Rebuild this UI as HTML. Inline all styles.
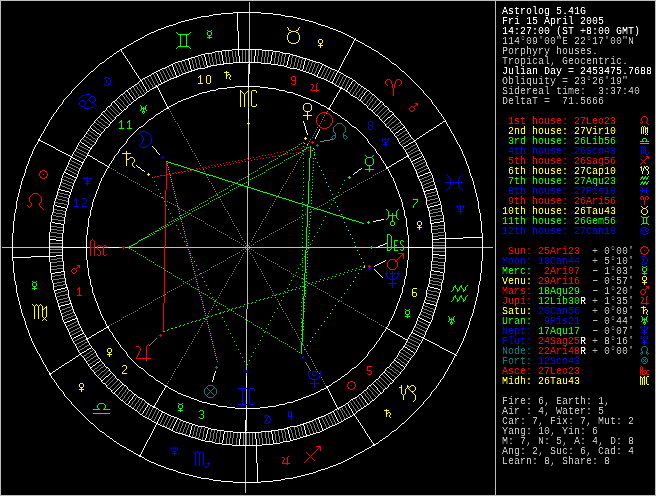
<!DOCTYPE html>
<html><head><meta charset="utf-8"><title>Astrolog 5.41G</title>
<style>
html,body{margin:0;padding:0;background:#000;}
body{width:656px;height:496px;position:relative;overflow:hidden;font-family:"Liberation Mono",monospace;}
svg{position:absolute;left:0;top:0;display:block;}
#side{position:absolute;left:502px;top:0;width:154px;height:496px;filter:url(#thr);}
.r{position:absolute;left:0;height:10px;width:154px;white-space:pre;}
.s{position:absolute;top:0;white-space:pre;font-family:"Liberation Mono",monospace;font-size:10.5px;line-height:10px;height:10px;transform:scaleX(0.9523);transform-origin:0 0;font-weight:normal;letter-spacing:0;}
</style></head><body>
<svg width="656" height="496" viewBox="0 0 656 496" shape-rendering="crispEdges" fill="none" stroke-width="1">
<g transform="translate(0,0.5)">
<path stroke="#bfbfbf" d="M0 0h656M2 247h10M13 247h36M50 247h11M88 247h2M95 247h2M98 247h5M104 247h4M119 247h3M125 247h3M129 247h35M165 247h23M189 247h58M248 247h58M307 247h63M373 247h3M378 247h9M388 247h3M392 247h2M395 247h8M404 247h3M434 247h11M446 247h36M483 247h10M0 495h656M246 387h1M248 107h1"/>
<path stroke="#ffffff" d="M233 12h28M221 13h12M261 13h12M213 14h8M273 14h8M209 15h4M281 15h4M201 16h8M285 16h8M197 17h4M293 17h4M193 18h4M297 18h4M189 19h4M301 19h4M185 20h4M305 20h4M181 21h4M309 21h4M178 22h3M313 22h3M176 23h2M316 23h2M173 24h3M318 24h3M169 25h4M321 25h4M166 26h3M325 26h3M164 27h2M328 27h2M161 28h3M330 28h3M158 29h3M333 29h3M156 30h2M336 30h2M154 31h2M338 31h3M151 32h3M341 32h2M149 33h2M343 33h2M147 34h2M345 34h2M145 35h2M347 35h2M349 36h2M142 37h2M351 37h2M140 38h2M138 39h2M354 39h2M136 40h2M356 40h2M134 41h2M358 41h2M360 42h2M131 43h2M362 43h2M129 44h2M127 45h2M365 45h2M367 46h2M124 47h2M369 47h2M122 48h2M120 49h2M232 49h30M372 49h2M222 50h10M262 50h11M374 50h2M117 51h2M215 51h7M273 51h7M376 51h2M212 52h3M280 52h3M114 53h2M205 53h7M283 53h7M201 54h4M290 54h3M380 54h2M198 55h3M293 55h4M110 56h2M195 56h3M297 56h3M383 56h2M191 57h4M300 57h3M107 58h2M188 58h3M303 58h4M386 58h2M185 59h4M307 59h3M182 60h3M310 60h3M178 61h4M313 61h3M102 62h2M175 62h3M233 62h28M316 62h4M100 63h2M173 63h2M223 63h10M261 63h10M320 63h2M392 63h2M171 64h2M217 64h7M271 64h7M322 64h2M394 64h2M169 65h2M211 65h6M278 65h6M324 65h2M167 66h2M207 66h4M284 66h3M326 66h2M165 67h2M205 67h3M287 67h3M328 67h2M162 68h3M198 68h7M290 68h7M330 68h2M160 69h2M195 69h3M297 69h3M332 69h3M158 70h2M191 70h4M300 70h3M335 70h2M91 71h2M156 71h2M189 71h3M303 71h3M337 71h2M402 71h2M154 72h2M186 72h3M306 72h3M339 72h2M152 73h2M183 73h3M309 73h3M341 73h2M181 74h2M312 74h2M149 75h2M179 75h2M314 75h2M344 75h2M147 76h2M176 76h3M316 76h2M346 76h2M145 77h2M174 77h3M318 77h3M348 77h2M143 78h2M171 78h3M321 78h3M350 78h2M169 79h2M324 79h2M140 80h2M167 80h2M326 80h2M353 80h2M165 81h2M328 81h2M163 82h2M330 82h3M161 83h2M332 83h2M135 84h2M159 84h2M358 84h2M335 85h2M132 86h2M156 86h2M235 86h25M337 86h2M361 86h2M154 87h2M227 87h8M260 87h8M339 87h3M129 88h2M152 88h2M218 88h9M268 88h8M340 88h3M364 88h2M150 89h2M216 89h2M276 89h3M343 89h2M126 90h2M210 90h6M279 90h6M345 90h2M367 90h2M147 91h2M207 91h3M285 91h2M346 91h2M202 92h5M287 92h6M199 93h3M293 93h2M121 94h2M197 94h2M295 94h3M372 94h2M142 95h2M194 95h3M298 95h3M351 95h2M140 96h2M191 96h3M301 96h2M353 96h2M138 97h2M189 97h2M303 97h3M355 97h2M186 98h3M306 98h3M183 99h3M309 99h2M134 100h2M181 100h2M311 100h3M359 100h2M113 101h2M178 101h3M314 101h2M380 101h2M316 102h2M175 103h2M318 103h2M129 104h2M173 104h2M364 104h2M171 105h2M321 105h3M108 106h2M169 106h2M324 106h2M385 106h2M167 107h2M166 108h3M327 108h3M124 109h2M164 109h2M329 109h2M369 109h2M371 110h2M103 111h2M161 111h2M390 111h2M333 112h2M158 113h2M335 113h2M101 114h2M156 114h2M392 114h2M117 115h2M338 115h2M376 115h2M388 117h2M151 118h2M342 118h2M149 119h2M345 120h2M443 121h3M110 122h2M440 123h2M437 125h2M141 126h2M352 126h2M106 127h2M139 127h2M354 127h2M387 127h2M403 127h2M434 127h2M400 129h2M431 129h2M93 130h2M429 130h2M396 132h2M426 132h2M97 133h2M99 134h2M423 134h2M420 136h2M417 138h2M38 139h2M38 140h3M414 140h2M41 141h2M413 141h2M43 142h2M411 142h2M45 143h2M82 143h2M409 143h2M47 144h2M49 145h2M85 145h2M406 145h2M51 146h2M404 146h2M53 147h2M88 147h2M90 148h2M56 149h2M58 150h2M60 151h2M62 152h2M64 153h2M66 154h2M68 155h2M87 155h3M407 155h2M70 156h2M90 156h2M406 156h3M71 157h2M404 157h2M419 157h2M73 158h2M93 158h2M417 158h2M75 159h2M95 159h2M401 159h2M415 159h2M77 160h2M399 160h2M413 160h2M79 161h2M98 161h2M397 161h2M411 161h2M81 162h3M100 162h2M102 163h2M394 163h2M392 164h2M105 165h2M107 166h2M389 166h2M138 167h2M386 167h3M386 168h2M359 169h2M142 170h2M64 172h2M355 172h2M428 172h3M66 173h2M425 173h3M68 174h2M423 174h2M70 175h2M420 175h3M72 176h2M417 176h3M74 177h3M434 188h3M58 189h3M430 189h4M61 190h4M426 190h4M65 191h4M423 191h3M69 192h2M438 204h3M55 205h2M434 205h4M57 206h4M430 206h4M61 207h4M427 207h3M65 208h2M381 219h3M376 220h5M373 221h3M440 221h4M52 222h3M434 222h6M55 223h6M430 223h4M61 224h3M463 237h20M439 238h24M49 239h7M432 239h7M56 240h7M385 243h2M383 244h2M380 245h3M378 246h2M61 247h27M108 247h11M376 247h2M407 247h27M432 254h7M56 255h7M439 255h7M31 256h25M12 257h19M383 261h2M381 262h2M379 263h2M377 264h2M375 265h2M431 270h3M61 271h4M434 271h6M55 272h6M440 272h3M51 273h4M428 286h2M65 287h3M430 287h4M61 288h4M434 288h4M57 289h4M438 289h2M54 290h3M424 302h2M69 303h3M426 303h4M65 304h4M430 304h4M61 305h4M434 305h3M58 306h3M418 317h2M75 318h3M420 318h2M72 319h3M422 319h2M70 320h2M424 320h2M67 321h3M426 321h2M64 322h3M428 322h3M107 326h2M106 327h3M104 328h2M386 328h2M388 329h2M101 330h2M99 331h2M391 331h2M97 332h2M393 332h2M411 332h2M82 333h2M413 333h2M80 334h2M94 334h2M396 334h2M415 334h2M78 335h2M92 335h2M398 335h2M417 335h2M76 336h2M400 336h2M419 336h2M74 337h2M89 337h2M421 337h3M86 338h3M403 338h2M423 338h2M86 339h2M405 339h3M425 339h2M427 340h2M429 341h2M431 342h2M433 343h2M435 344h2M437 345h2M403 346h2M405 347h2M440 347h2M89 348h2M442 348h2M87 349h2M408 349h2M444 349h2M446 350h2M84 351h2M411 351h2M448 351h2M82 352h2M450 352h2M80 353h2M452 353h2M79 354h2M454 354h2M455 355h2M76 356h2M73 358h2M70 360h2M394 360h2M67 362h2M97 362h2M397 362h2M65 363h2M62 365h2M93 365h2M401 365h2M59 367h2M90 367h2M106 367h2M139 367h2M354 367h2M387 367h2M141 368h2M352 368h2M56 369h2M53 371h2M383 372h2M49 373h3M49 374h2M345 374h2M149 375h2M106 376h2M151 376h2M342 376h2M117 379h2M338 379h2M376 379h2M101 380h2M156 380h2M392 380h2M158 381h2M335 381h2M333 382h2M103 383h2M161 383h2M390 383h2M122 384h2M124 385h2M164 385h2M329 385h2M369 385h2M165 386h3M326 386h3M326 387h2M108 388h2M169 388h2M324 388h2M385 388h2M171 389h2M321 389h3M129 390h2M173 390h2M364 390h2M175 391h2M318 391h2M316 392h2M113 393h2M178 393h3M314 393h2M380 393h2M134 394h2M181 394h2M311 394h3M359 394h2M183 395h3M309 395h2M186 396h3M306 396h3M138 397h2M189 397h2M303 397h3M355 397h2M140 398h2M191 398h3M301 398h2M353 398h2M142 399h2M194 399h3M298 399h3M351 399h2M121 400h2M197 400h2M295 400h3M372 400h2M199 401h3M293 401h2M202 402h5M287 402h6M147 403h2M207 403h3M285 403h2M346 403h2M126 404h2M148 404h2M210 404h6M279 404h6M367 404h2M150 405h2M216 405h2M276 405h3M343 405h2M129 406h2M152 406h3M218 406h9M268 406h8M341 406h2M364 406h2M153 407h3M227 407h8M260 407h8M339 407h2M132 408h2M156 408h2M235 408h25M337 408h2M361 408h2M335 409h2M135 410h2M159 410h2M358 410h2M161 411h2M332 411h2M162 412h3M330 412h2M165 413h2M328 413h2M140 414h2M167 414h2M326 414h2M353 414h2M169 415h2M324 415h2M143 416h2M171 416h3M321 416h3M350 416h2M145 417h2M174 417h3M318 417h3M348 417h2M147 418h2M177 418h2M316 418h3M346 418h2M149 419h2M179 419h2M314 419h2M344 419h2M181 420h2M312 420h2M152 421h2M183 421h3M309 421h3M341 421h2M154 422h2M186 422h3M306 422h3M339 422h2M91 423h2M156 423h2M189 423h3M303 423h3M337 423h2M402 423h2M158 424h2M192 424h3M300 424h4M335 424h2M160 425h2M195 425h3M297 425h3M332 425h3M162 426h3M198 426h7M290 426h7M330 426h2M165 427h2M205 427h3M287 427h3M328 427h2M167 428h2M208 428h3M284 428h4M326 428h2M169 429h2M211 429h6M278 429h6M324 429h2M171 430h2M217 430h7M271 430h7M322 430h2M394 430h2M100 431h2M173 431h2M224 431h9M261 431h11M320 431h2M392 431h2M102 432h2M175 432h3M233 432h28M316 432h4M178 433h4M313 433h3M182 434h3M310 434h3M185 435h3M306 435h4M107 436h2M188 436h3M303 436h4M386 436h2M191 437h4M300 437h3M110 438h2M195 438h3M297 438h3M383 438h2M198 439h3M293 439h4M201 440h4M290 440h3M380 440h2M114 441h2M205 441h7M283 441h7M212 442h3M280 442h3M117 443h2M215 443h7M273 443h7M376 443h2M222 444h10M262 444h11M373 444h3M120 445h2M232 445h30M372 445h3M122 446h2M124 447h2M369 447h2M367 448h2M127 449h2M365 449h2M129 450h2M131 451h2M362 451h2M360 452h2M134 453h2M358 453h2M136 454h2M356 454h2M138 455h3M354 455h2M139 456h3M142 457h2M351 457h2M349 458h2M145 459h2M347 459h2M147 460h2M345 460h2M149 461h2M343 461h2M151 462h3M341 462h2M154 463h2M338 463h3M156 464h2M336 464h2M158 465h3M333 465h3M161 466h3M330 466h3M164 467h2M328 467h2M166 468h3M325 468h3M169 469h4M321 469h4M173 470h3M318 470h3M176 471h2M316 471h2M178 472h3M313 472h3M181 473h4M309 473h4M185 474h4M305 474h4M189 475h4M301 475h4M193 476h4M297 476h4M197 477h4M293 477h4M201 478h8M285 478h8M209 479h4M281 479h4M213 480h8M273 480h8M221 481h12M261 481h12M233 482h28M36 144h1M38 141h1M38 353h1M39 138h1M42 133h1M44 364h1M46 126h1M48 371h1M49 372h1M50 119h1M50 375h1M52 116h1M52 372h1M52 378h1M53 379h1M54 113h1M55 112h1M55 148h1M55 370h1M55 382h1M57 109h1M57 385h1M58 188h1M58 190h1M58 368h1M59 106h1M59 388h1M60 105h1M60 389h1M61 104h1M61 366h1M61 390h1M62 391h1M64 99h1M64 171h1M64 323h1M64 364h1M65 98h1M65 396h1M66 97h1M66 397h1M67 96h1M67 398h1M68 95h1M68 399h1M69 94h1M69 361h1M69 400h1M70 93h1M70 401h1M72 90h1M72 359h1M72 404h1M73 89h1M73 338h1M73 405h1M74 88h1M74 151h1M74 343h1M74 406h1M75 87h1M75 357h1M75 407h1M76 86h1M76 178h1M76 408h1M77 85h1M77 409h1M78 84h1M78 355h1M78 410h1M79 83h1M79 142h1M79 352h1M79 411h1M80 82h1M80 412h1M81 81h1M81 139h1M81 142h1M81 355h1M81 413h1M82 80h1M82 138h1M82 356h1M82 414h1M83 79h1M83 137h1M83 161h1M83 332h1M83 357h1M83 415h1M84 78h1M84 144h1M84 334h1M84 416h1M85 77h1M85 134h1M85 158h1M85 360h1M85 417h1M86 76h1M86 337h1M86 350h1M86 418h1M87 75h1M87 131h1M87 146h1M87 154h1M87 340h1M87 363h1M87 419h1M88 74h1M88 420h1M89 73h1M89 128h1M89 366h1M89 421h1M90 72h1M90 149h1M90 345h1M90 368h1M90 422h1M91 125h1M91 128h1M91 147h1M91 336h1M91 369h1M92 124h1M92 129h1M92 146h1M92 157h1M92 348h1M92 366h1M92 370h1M93 70h1M93 123h1M93 145h1M93 349h1M93 371h1M93 424h1M94 69h1M94 144h1M94 350h1M94 425h1M95 68h1M95 120h1M95 131h1M95 364h1M95 374h1M95 426h1M96 67h1M96 119h1M96 132h1M96 333h1M96 363h1M96 375h1M96 427h1M97 66h1M97 118h1M97 160h1M97 376h1M97 428h1M98 65h1M98 117h1M98 137h1M98 357h1M98 377h1M98 429h1M99 64h1M99 116h1M99 136h1M99 358h1M99 361h1M99 378h1M99 430h1M100 115h1M100 135h1M100 379h1M101 113h1M101 133h1M101 361h1M101 381h1M102 112h1M102 132h1M102 177h1M102 362h1M102 382h1M103 115h1M103 131h1M103 329h1M103 363h1M103 379h1M104 61h1M104 116h1M104 164h1M104 320h1M104 378h1M104 433h1M105 60h1M105 110h1M105 117h1M105 128h1M105 366h1M105 377h1M105 384h1M105 434h1M106 59h1M106 118h1M106 435h1M107 107h1M107 119h1M107 168h1M107 387h1M108 120h1M108 126h1M108 167h1M108 328h1M108 368h1M108 375h1M109 57h1M109 121h1M109 374h1M109 437h1M110 105h1M110 123h1M110 163h1M110 331h1M110 371h1M110 373h1M110 389h1M111 332h1M111 372h1M112 55h1M112 102h1M112 121h1M112 160h1M112 373h1M112 392h1M112 439h1M113 54h1M113 120h1M113 374h1M113 440h1M114 102h1M114 119h1M114 337h1M114 375h1M114 392h1M115 100h1M115 103h1M115 155h1M115 391h1M115 394h1M116 52h1M116 99h1M116 104h1M116 116h1M116 154h1M116 340h1M116 378h1M116 390h1M116 395h1M116 442h1M117 98h1M117 105h1M117 153h1M117 341h1M117 389h1M117 396h1M118 97h1M118 388h1M118 397h1M119 50h1M119 96h1M119 108h1M119 114h1M119 344h1M119 380h1M119 387h1M119 398h1M119 444h1M120 95h1M120 109h1M120 113h1M120 148h1M120 381h1M120 386h1M120 399h1M121 110h1M121 112h1M121 147h1M121 347h1M121 382h1M121 385h1M122 52h1M122 111h1M122 146h1M122 348h1M122 383h1M123 93h1M123 110h1M123 145h1M123 349h1M123 401h1M124 55h1M124 92h1M124 144h1M124 350h1M124 402h1M125 91h1M125 143h1M125 351h1M125 403h1M126 46h1M126 58h1M126 108h1M126 386h1M126 448h1M127 91h1M128 61h1M128 89h1M128 92h1M128 105h1M128 138h1M128 356h1M128 389h1M128 403h1M128 405h1M129 137h1M129 357h1M130 64h1M130 95h1M130 136h1M130 358h1M130 400h1M131 87h1M131 96h1M131 103h1M131 135h1M131 359h1M131 391h1M131 399h1M131 407h1M132 102h1M132 134h1M132 360h1M132 392h1M133 42h1M133 69h1M133 99h1M133 101h1M133 133h1M133 361h1M133 393h1M133 396h1M133 452h1M134 85h1M134 132h1M134 362h1M134 395h1M134 409h1M135 72h1M135 131h1M135 363h1M136 99h1M136 130h1M136 165h1M136 364h1M136 395h1M137 75h1M137 83h1M137 98h1M137 129h1M137 166h1M137 365h1M137 396h1M137 411h1M138 82h1M138 128h1M138 366h1M138 412h1M139 78h1M139 81h1M139 413h1M140 79h1M140 168h1M140 454h1M141 81h1M141 169h1M142 79h1M142 413h1M142 415h1M143 125h1M143 369h1M144 36h1M144 86h1M144 94h1M144 124h1M144 171h1M144 370h1M144 400h1M144 410h1M144 458h1M145 93h1M145 123h1M145 371h1M145 401h1M146 92h1M146 122h1M146 372h1M146 402h1M146 407h1M147 121h1M147 373h1M148 120h1M148 374h1M148 439h1M149 90h1M151 74h1M151 420h1M152 146h1M153 117h1M153 147h1M153 377h1M154 116h1M154 148h1M154 378h1M154 405h1M155 115h1M155 149h1M155 379h1M156 73h1M156 85h1M156 402h1M156 424h1M157 87h1M157 152h1M158 85h1M158 153h1M158 409h1M159 154h1M160 112h1M160 382h1M160 395h1M161 82h1M163 110h1M163 384h1M163 390h1M165 387h1M167 106h1M168 387h1M176 75h1M177 102h1M177 392h1M177 419h1M188 60h1M191 69h1M192 425h1M207 65h1M208 429h1M245 433h1M246 407h1M248 87h1M249 61h1M286 65h1M287 429h1M302 69h1M303 425h1M306 434h1M318 419h1M320 104h1M320 390h1M322 65h1M326 107h1M327 388h1M329 107h1M331 104h1M331 110h1M331 384h1M332 81h1M332 111h1M332 383h1M333 412h1M334 84h1M334 410h1M335 97h1M337 72h1M337 114h1M337 380h1M337 407h1M338 70h1M338 92h1M338 409h1M338 421h1M340 89h1M340 116h1M340 378h1M341 117h1M341 377h1M343 74h1M343 420h1M344 119h1M344 375h1M345 404h1M346 55h1M347 121h1M347 373h1M348 87h1M348 92h1M348 122h1M348 372h1M348 402h1M349 93h1M349 123h1M349 371h1M349 401h1M350 84h1M350 94h1M350 124h1M350 370h1M350 400h1M350 408h1M351 125h1M351 369h1M352 79h1M352 81h1M352 415h1M353 38h1M353 174h1M353 413h1M353 456h1M354 40h1M354 173h1M354 415h1M355 38h1M355 81h1M355 413h1M355 416h1M356 82h1M356 128h1M356 366h1M356 412h1M357 83h1M357 98h1M357 129h1M357 171h1M357 365h1M357 396h1M357 411h1M357 419h1M358 99h1M358 130h1M358 170h1M358 364h1M358 395h1M359 131h1M359 363h1M359 422h1M360 85h1M360 99h1M360 132h1M360 362h1M360 409h1M361 101h1M361 133h1M361 168h1M361 361h1M361 393h1M361 395h1M361 425h1M362 96h1M362 102h1M362 134h1M362 360h1M362 392h1M363 87h1M363 95h1M363 103h1M363 135h1M363 359h1M363 391h1M363 398h1M363 407h1M363 428h1M364 44h1M364 136h1M364 358h1M364 399h1M364 450h1M365 92h1M365 137h1M365 357h1M366 89h1M366 91h1M366 105h1M366 138h1M366 356h1M366 389h1M366 402h1M366 405h1M366 433h1M367 403h1M368 108h1M368 386h1M368 436h1M369 91h1M369 143h1M369 351h1M369 403h1M370 92h1M370 144h1M370 350h1M370 402h1M370 439h1M371 48h1M371 93h1M371 145h1M371 349h1M371 384h1M371 401h1M371 446h1M372 111h1M372 146h1M372 348h1M372 383h1M372 442h1M373 109h1M373 112h1M373 147h1M373 347h1M373 382h1M373 384h1M373 443h1M374 95h1M374 108h1M374 113h1M374 148h1M374 266h1M374 269h1M374 381h1M374 385h1M374 399h1M375 96h1M375 107h1M375 114h1M375 270h1M375 344h1M375 380h1M375 386h1M375 398h1M376 97h1M376 106h1M376 271h1M376 387h1M376 397h1M377 98h1M377 105h1M377 153h1M377 272h1M377 341h1M377 396h1M378 52h1M378 99h1M378 104h1M378 116h1M378 154h1M378 273h1M378 340h1M378 378h1M378 390h1M378 395h1M378 442h1M379 53h1M379 100h1M379 103h1M379 155h1M379 274h1M379 391h1M379 394h1M379 441h1M380 102h1M380 119h1M380 275h1M380 337h1M380 375h1M380 392h1M381 120h1M381 276h1M381 374h1M382 55h1M382 102h1M382 121h1M382 160h1M382 277h1M382 373h1M382 392h1M382 439h1M383 122h1M383 332h1M384 105h1M384 121h1M384 123h1M384 163h1M384 331h1M384 371h1M384 389h1M385 57h1M385 120h1M385 260h1M385 373h1M385 437h1M386 119h1M386 126h1M386 166h1M386 327h1M386 368h1M386 374h1M387 107h1M387 118h1M387 326h1M387 375h1M387 387h1M388 59h1M388 376h1M388 435h1M389 60h1M389 110h1M389 128h1M389 366h1M389 377h1M389 384h1M389 434h1M390 61h1M390 116h1M390 320h1M390 330h1M390 378h1M390 433h1M391 62h1M391 115h1M391 131h1M391 165h1M391 363h1M391 379h1M391 432h1M392 112h1M392 132h1M392 177h1M392 362h1M392 382h1M393 113h1M393 133h1M393 361h1M393 381h1M394 115h1M394 359h1M394 379h1M395 116h1M395 133h1M395 136h1M395 333h1M395 358h1M395 378h1M396 65h1M396 117h1M396 137h1M396 162h1M396 357h1M396 361h1M396 377h1M396 429h1M397 66h1M397 118h1M397 376h1M397 428h1M398 67h1M398 119h1M398 131h1M398 375h1M398 427h1M399 68h1M399 120h1M399 130h1M399 363h1M399 374h1M399 426h1M400 69h1M400 144h1M400 350h1M400 364h1M400 425h1M401 70h1M401 123h1M401 145h1M401 349h1M401 371h1M401 424h1M402 124h1M402 128h1M402 146h1M402 337h1M402 348h1M402 370h1M403 125h1M403 158h1M403 347h1M403 366h1M403 369h1M404 72h1M404 126h1M404 149h1M404 345h1M404 422h1M405 73h1M405 128h1M405 366h1M405 421h1M406 74h1M406 420h1M407 75h1M407 131h1M407 154h1M407 340h1M407 348h1M407 363h1M407 419h1M408 76h1M408 144h1M408 157h1M408 418h1M409 77h1M409 134h1M409 158h1M409 360h1M409 417h1M410 78h1M410 334h1M410 350h1M410 416h1M411 79h1M411 137h1M411 162h1M411 333h1M411 357h1M411 415h1M412 80h1M412 138h1M412 356h1M412 414h1M413 81h1M413 139h1M413 352h1M413 355h1M413 413h1M414 82h1M414 412h1M415 83h1M415 142h1M415 352h1M415 411h1M416 84h1M416 139h1M416 410h1M417 85h1M417 409h1M418 86h1M418 316h1M418 408h1M419 87h1M419 137h1M419 407h1M420 88h1M420 151h1M420 343h1M420 406h1M421 89h1M421 156h1M421 405h1M422 90h1M422 135h1M422 404h1M424 93h1M424 401h1M425 94h1M425 133h1M425 400h1M426 95h1M426 399h1M427 96h1M427 398h1M428 97h1M428 131h1M428 397h1M429 98h1M429 396h1M430 99h1M430 171h1M430 323h1M432 391h1M433 104h1M433 128h1M433 390h1M434 105h1M434 389h1M435 106h1M435 388h1M436 126h1M436 306h1M437 109h1M437 385h1M439 112h1M439 124h1M439 346h1M439 382h1M440 113h1M441 379h1M442 116h1M442 122h1M442 378h1M444 119h1M445 120h1M446 371h1M448 126h1M450 364h1M452 133h1M456 353h1M458 144h1"/>
<path stroke="#ff0000" d="M292 76h3M387 79h3M397 79h3M292 80h4M292 84h3M311 84h2M311 90h8M415 103h3M416 104h2M411 106h2M411 111h2M322 112h5M320 113h2M327 113h2M643 116h3M320 127h2M327 127h2M322 128h5M311 142h3M646 156h3M647 157h2M42 170h3M190 170h2M40 171h2M45 171h2M184 171h2M178 172h2M172 173h2M166 174h2M169 174h2M160 175h2M163 175h2M157 176h2M40 177h2M45 177h2M42 178h3M33 193h5M641 196h2M646 196h2M98 245h2M104 245h2M643 246h3M90 247h5M122 247h3M641 247h2M646 247h2M398 253h6M641 253h2M646 253h2M402 254h2M643 254h3M98 255h2M104 255h2M390 259h5M395 260h2M395 261h2M77 265h3M78 266h2M368 266h3M73 268h2M390 269h5M73 273h2M646 286h3M647 287h2M78 288h2M642 289h2M642 294h2M77 295h5M641 297h2M641 303h8M159 335h3M136 346h3M136 358h15M367 366h5M367 370h4M640 370h3M644 370h2M647 370h2M642 371h2M645 373h2M368 374h3M642 374h3M647 374h2M350 381h3M348 382h2M353 382h2M348 388h2M353 388h2M350 389h3M316 446h5M319 447h2M282 457h2M282 463h8M27 205h1M28 206h1M29 207h1M30 196h1M30 202h1M30 206h1M31 195h1M32 194h1M38 194h1M39 195h1M40 172h1M40 176h1M40 196h1M40 202h1M40 206h1M41 207h1M42 208h1M43 174h1M43 209h1M46 172h1M46 176h1M72 269h1M72 272h1M75 269h1M75 272h1M76 268h1M77 267h1M77 289h1M79 267h1M79 287h1M91 240h1M92 239h1M93 240h1M97 254h1M98 249h1M99 250h1M100 246h1M106 246h1M106 254h1M123 246h1M123 248h1M136 357h1M139 347h1M147 345h1M148 344h1M154 177h1M155 176h1M160 334h1M160 336h1M175 172h1M176 173h1M181 171h1M182 172h1M187 170h1M188 171h1M196 168h1M197 169h1M199 168h1M200 169h1M202 167h1M203 168h1M205 167h1M206 168h1M208 166h1M209 167h1M211 165h1M212 167h1M214 165h1M215 166h1M217 164h1M218 166h1M220 164h1M221 165h1M223 163h1M224 165h1M226 162h1M227 164h1M229 162h1M230 164h1M232 161h1M233 163h1M235 161h1M236 162h1M238 160h1M239 162h1M241 160h1M242 161h1M244 159h1M245 161h1M247 158h1M248 160h1M250 158h1M251 160h1M253 157h1M254 159h1M256 157h1M257 159h1M259 156h1M260 158h1M262 155h1M263 158h1M265 155h1M266 157h1M268 154h1M269 157h1M271 154h1M272 156h1M274 153h1M275 156h1M277 152h1M278 155h1M280 152h1M282 462h1M283 151h1M284 154h1M286 151h1M287 154h1M287 464h1M288 456h1M290 153h1M291 83h1M292 150h1M293 153h1M295 149h1M296 152h1M298 148h1M299 152h1M301 148h1M302 151h1M304 147h1M304 462h1M305 151h1M305 461h1M306 452h1M306 460h1M307 147h1M307 453h1M307 459h1M308 150h1M308 454h1M308 458h1M309 455h1M309 457h1M310 456h1M311 89h1M311 150h1M311 455h1M311 457h1M312 141h1M312 143h1M312 454h1M312 458h1M313 453h1M313 459h1M314 452h1M314 460h1M315 451h1M316 91h1M316 450h1M317 83h1M317 449h1M318 115h1M318 125h1M318 448h1M319 114h1M319 126h1M324 120h1M329 114h1M329 126h1M330 115h1M330 125h1M348 383h1M348 387h1M351 385h1M354 383h1M354 387h1M367 373h1M369 265h1M369 267h1M386 80h1M386 84h1M387 85h1M388 261h1M388 267h1M389 260h1M389 268h1M390 80h1M395 268h1M396 80h1M396 267h1M397 259h1M398 258h1M399 85h1M399 257h1M400 80h1M400 84h1M400 256h1M401 255h1M410 107h1M410 110h1M413 107h1M413 110h1M414 106h1M415 105h1M417 105h1M640 122h1M640 164h1M641 123h1M641 159h1M641 163h1M641 199h1M641 248h1M641 252h1M641 290h1M641 293h1M641 302h1M641 366h1M642 117h1M642 160h1M642 162h1M643 161h1M644 160h1M644 162h1M644 250h1M644 290h1M644 293h1M644 372h1M645 159h1M645 163h1M645 289h1M646 117h1M646 158h1M646 288h1M646 304h1M647 123h1M647 199h1M647 248h1M647 252h1M647 296h1M648 124h1M648 158h1M648 288h1"/>
<path stroke="#00ff00" d="M208 31h3M178 34h11M208 35h3M207 37h5M178 46h11M141 108h5M142 111h3M120 121h2M128 121h2M119 128h5M127 128h5M643 138h3M640 141h4M645 141h4M640 143h9M302 150h2M367 157h5M166 161h2M168 162h3M171 163h3M174 164h4M178 165h3M367 165h5M181 166h3M184 167h3M187 168h3M190 169h4M365 169h9M194 170h3M197 171h3M200 172h3M203 173h3M206 174h3M209 175h4M213 176h3M216 177h3M348 177h3M641 177h2M644 177h2M219 178h3M643 178h2M646 178h2M222 179h3M225 180h3M228 181h4M232 182h3M641 182h2M644 182h2M235 183h3M643 183h2M646 183h2M238 184h3M240 185h4M244 186h4M248 187h3M251 188h3M254 189h3M257 190h3M260 191h3M263 192h4M267 193h3M270 194h3M273 195h3M276 196h3M279 197h3M282 198h4M286 199h3M413 199h5M289 200h3M292 201h3M295 202h3M298 203h4M302 204h3M305 205h3M307 206h4M311 207h3M314 208h3M317 209h4M321 210h3M324 211h3M327 212h3M330 213h3M333 214h3M180 215h2M336 215h4M388 215h9M340 216h3M343 217h3M642 217h6M346 218h3M349 219h3M352 220h4M356 221h3M391 221h3M359 222h3M367 222h3M362 223h2M642 223h6M391 225h3M157 230h2M155 231h2M387 234h3M147 236h2M145 237h2M143 238h2M141 239h2M139 240h2M394 240h4M401 240h2M135 243h2M133 244h2M131 245h2M186 245h2M394 245h3M129 246h2M370 247h3M387 250h3M394 250h4M401 250h2M305 252h2M189 253h2M304 256h2M643 267h3M305 269h2M643 271h3M305 272h2M642 273h5M33 282h3M304 284h2M33 286h3M302 286h3M454 286h2M460 286h2M304 287h2M32 288h5M197 289h2M304 290h2M457 290h2M463 290h2M304 293h2M454 296h2M460 296h2M302 298h2M303 299h2M457 300h2M463 300h2M303 302h2M303 305h2M303 308h2M406 310h3M303 311h2M219 313h2M215 314h2M406 314h3M405 316h5M206 317h2M203 318h2M449 319h5M642 319h5M302 320h2M301 322h2M450 322h3M643 322h3M187 323h2M302 323h2M301 326h3M175 327h2M171 328h2M302 329h2M301 330h2M163 331h2M301 334h2M301 338h2M301 344h2M99 403h5M179 404h3M179 408h3M93 409h7M103 409h7M178 410h5M200 410h3M93 413h17M201 414h2M200 418h3M32 281h1M34 287h1M34 289h1M36 281h1M98 404h1M98 408h1M104 404h1M104 408h1M119 122h1M121 120h1M127 122h1M128 247h1M129 120h1M129 248h1M131 249h1M133 250h1M135 251h1M137 242h1M137 253h1M138 241h1M139 254h1M140 105h1M140 110h1M141 109h1M141 255h1M142 112h1M143 107h1M143 113h1M143 256h1M144 112h1M145 109h1M145 257h1M146 105h1M146 110h1M147 259h1M149 234h1M149 260h1M150 235h1M151 233h1M151 261h1M152 177h1M152 234h1M153 232h1M153 262h1M154 181h1M154 233h1M155 264h1M156 185h1M157 265h1M158 189h1M159 228h1M159 266h1M160 193h1M160 229h1M161 227h1M161 267h1M162 197h1M162 228h1M163 226h1M163 268h1M164 201h1M164 227h1M165 225h1M165 270h1M166 205h1M166 226h1M167 163h1M167 165h1M167 224h1M167 271h1M167 330h1M168 167h1M168 169h1M168 209h1M168 225h1M168 329h1M169 171h1M169 173h1M169 222h1M169 272h1M170 175h1M170 177h1M170 213h1M170 224h1M171 179h1M171 181h1M171 221h1M171 273h1M172 183h1M172 185h1M172 217h1M172 223h1M173 187h1M173 189h1M173 220h1M173 275h1M174 191h1M174 193h1M174 221h1M175 195h1M175 197h1M175 219h1M175 276h1M176 32h1M176 48h1M176 199h1M176 201h1M176 220h1M176 225h1M177 33h1M177 47h1M177 203h1M177 205h1M177 218h1M177 277h1M178 207h1M178 209h1M178 219h1M178 229h1M178 403h1M179 211h1M179 213h1M179 216h1M179 278h1M179 326h1M180 233h1M180 325h1M180 409h1M180 411h1M181 219h1M181 221h1M181 279h1M182 217h1M182 223h1M182 225h1M182 237h1M182 403h1M183 214h1M183 227h1M183 229h1M183 281h1M183 325h1M184 216h1M184 231h1M184 233h1M184 241h1M184 324h1M185 213h1M185 235h1M185 237h1M185 282h1M186 215h1M186 239h1M186 241h1M187 212h1M187 243h1M187 283h1M188 214h1M188 247h1M188 249h1M189 33h1M189 47h1M189 210h1M189 251h1M189 284h1M190 32h1M190 48h1M190 213h1M190 255h1M190 257h1M191 209h1M191 259h1M191 261h1M191 286h1M191 322h1M192 211h1M192 257h1M192 263h1M192 265h1M192 321h1M193 208h1M193 267h1M193 269h1M193 287h1M194 210h1M194 261h1M194 271h1M194 273h1M195 207h1M195 275h1M195 277h1M195 288h1M195 321h1M196 209h1M196 265h1M196 279h1M196 281h1M196 320h1M197 206h1M197 283h1M197 285h1M198 208h1M198 269h1M198 287h1M199 204h1M199 291h1M199 293h1M199 320h1M199 411h1M199 417h1M200 207h1M200 273h1M200 295h1M200 319h1M201 203h1M201 292h1M201 297h1M201 299h1M202 206h1M202 277h1M202 301h1M202 303h1M203 202h1M203 293h1M203 305h1M203 307h1M204 205h1M204 281h1M204 309h1M204 311h1M205 201h1M205 294h1M205 313h1M205 315h1M206 204h1M206 285h1M206 319h1M207 30h1M207 200h1M207 295h1M207 321h1M207 323h1M208 203h1M208 289h1M208 316h1M208 325h1M208 327h1M209 36h1M209 38h1M209 198h1M209 297h1M209 329h1M209 331h1M210 201h1M210 293h1M210 333h1M210 335h1M211 30h1M211 197h1M211 298h1M211 316h1M211 337h1M211 339h1M212 200h1M212 297h1M212 315h1M212 341h1M212 343h1M213 196h1M213 299h1M213 345h1M213 347h1M214 199h1M214 301h1M214 349h1M214 351h1M215 195h1M215 300h1M215 353h1M215 355h1M216 198h1M216 305h1M216 357h1M216 359h1M217 194h1M217 302h1M217 361h1M218 197h1M218 309h1M219 192h1M219 303h1M220 196h1M220 312h1M221 191h1M221 304h1M222 195h1M222 317h1M223 190h1M223 305h1M223 312h1M224 194h1M224 311h1M224 321h1M225 189h1M225 306h1M226 193h1M226 325h1M227 188h1M227 308h1M227 311h1M228 192h1M228 310h1M228 329h1M229 186h1M229 309h1M230 190h1M230 333h1M231 185h1M232 189h1M232 308h1M232 337h1M233 184h1M233 311h1M234 188h1M234 341h1M235 308h1M235 313h1M236 187h1M236 307h1M236 345h1M237 182h1M237 314h1M238 186h1M238 349h1M239 180h1M239 307h1M239 315h1M240 306h1M240 353h1M241 179h1M241 316h1M242 184h1M242 357h1M243 178h1M243 306h1M243 317h1M244 183h1M244 304h1M244 361h1M245 177h1M245 319h1M246 182h1M246 365h1M247 176h1M247 304h1M247 320h1M247 364h1M248 180h1M248 303h1M249 174h1M249 321h1M249 360h1M250 179h1M251 173h1M251 303h1M251 322h1M251 356h1M252 178h1M252 302h1M253 172h1M253 324h1M253 352h1M254 177h1M255 171h1M255 302h1M255 325h1M255 348h1M256 176h1M256 300h1M257 170h1M257 326h1M258 175h1M258 344h1M259 168h1M259 300h1M259 327h1M260 174h1M260 299h1M260 340h1M261 167h1M261 328h1M262 173h1M262 336h1M263 166h1M263 299h1M263 330h1M264 172h1M264 298h1M264 332h1M265 165h1M265 331h1M266 170h1M266 328h1M267 164h1M267 298h1M267 332h1M268 169h1M268 297h1M268 324h1M269 162h1M269 333h1M270 168h1M270 320h1M271 161h1M271 297h1M271 335h1M272 167h1M272 295h1M272 316h1M273 160h1M273 336h1M274 166h1M274 312h1M275 159h1M275 295h1M275 337h1M276 165h1M276 294h1M277 158h1M277 308h1M277 338h1M278 164h1M279 156h1M279 294h1M279 304h1M279 340h1M280 163h1M280 293h1M281 155h1M281 300h1M281 341h1M282 162h1M283 154h1M283 293h1M283 296h1M283 342h1M284 160h1M284 291h1M285 153h1M285 292h1M285 343h1M286 159h1M287 152h1M287 288h1M287 292h1M287 344h1M288 158h1M288 290h1M289 150h1M289 284h1M289 346h1M290 157h1M291 149h1M291 280h1M291 290h1M291 347h1M292 156h1M292 289h1M293 148h1M293 276h1M293 348h1M294 155h1M295 147h1M295 289h1M295 349h1M296 154h1M296 272h1M296 287h1M297 146h1M297 351h1M298 153h1M298 268h1M299 144h1M299 288h1M299 352h1M300 152h1M300 264h1M300 286h1M301 143h1M301 302h1M301 306h1M301 310h1M301 314h1M301 318h1M302 198h1M302 202h1M302 206h1M302 210h1M302 214h1M302 218h1M302 222h1M302 226h1M302 230h1M302 234h1M302 238h1M302 242h1M302 246h1M302 250h1M302 254h1M302 258h1M302 260h1M302 262h1M302 266h1M302 270h1M302 274h1M302 278h1M302 282h1M302 290h1M302 294h1M302 319h1M302 321h1M303 142h1M303 146h1M303 154h1M303 158h1M303 162h1M303 166h1M303 170h1M303 174h1M303 178h1M303 182h1M303 186h1M303 190h1M303 194h1M304 149h1M304 285h1M305 296h1M306 148h1M306 275h1M306 278h1M306 281h1M307 204h1M307 251h1M307 254h1M307 257h1M307 260h1M307 263h1M307 266h1M307 285h1M308 147h1M308 236h1M308 239h1M308 242h1M308 245h1M308 248h1M308 283h1M309 221h1M309 224h1M309 227h1M309 230h1M309 233h1M310 209h1M310 212h1M310 215h1M310 218h1M310 244h1M311 191h1M311 194h1M311 197h1M311 200h1M311 203h1M311 284h1M312 173h1M312 176h1M312 179h1M312 182h1M312 185h1M312 188h1M312 240h1M312 282h1M313 158h1M313 161h1M313 164h1M313 167h1M313 170h1M314 149h1M314 152h1M314 155h1M314 236h1M315 283h1M316 281h1M317 232h1M319 228h1M319 281h1M320 279h1M321 224h1M323 220h1M323 280h1M324 278h1M325 216h1M327 279h1M328 277h1M329 208h1M331 204h1M331 278h1M332 276h1M333 200h1M335 276h1M336 196h1M336 274h1M338 192h1M339 275h1M340 188h1M340 273h1M342 184h1M343 274h1M344 180h1M344 272h1M347 272h1M348 270h1M349 176h1M349 178h1M351 271h1M352 269h1M355 270h1M356 268h1M359 269h1M360 266h1M363 267h1M364 265h1M365 155h1M366 156h1M366 158h1M366 164h1M368 221h1M368 223h1M371 246h1M371 248h1M372 156h1M372 158h1M372 164h1M373 155h1M386 209h1M386 219h1M387 210h1M387 218h1M390 235h1M390 249h1M397 210h1M397 218h1M398 209h1M398 219h1M400 249h1M401 244h1M402 245h1M403 241h1M405 309h1M407 315h1M407 317h1M409 309h1M414 204h1M415 203h1M416 202h1M448 316h1M448 321h1M449 320h1M450 323h1M451 291h1M451 301h1M451 318h1M451 324h1M452 290h1M452 300h1M452 323h1M453 320h1M454 316h1M454 321h1M455 285h1M455 287h1M455 295h1M455 297h1M456 288h1M456 298h1M457 289h1M457 291h1M457 299h1M457 301h1M461 285h1M461 287h1M461 295h1M461 297h1M462 288h1M462 298h1M463 289h1M463 291h1M463 299h1M463 301h1M466 286h1M466 296h1M467 285h1M467 295h1M640 179h1M640 184h1M641 178h1M641 183h1M641 216h1M641 224h1M641 316h1M641 321h1M642 176h1M642 181h1M642 266h1M642 320h1M643 179h1M643 184h1M643 323h1M644 272h1M644 274h1M644 318h1M644 324h1M645 176h1M645 181h1M645 323h1M646 179h1M646 184h1M646 266h1M646 320h1M647 177h1M647 182h1M647 316h1M647 321h1M648 176h1M648 181h1M648 216h1M648 224h1"/>
<path stroke="#7f7f7f" d="M101 119h2M99 122h2M105 122h2M392 122h2M97 124h2M396 124h2M103 125h2M398 126h2M101 127h2M392 127h2M97 129h2M394 129h2M403 131h2M91 132h2M400 133h2M405 134h2M89 135h2M95 135h2M397 135h2M402 136h2M86 137h2M406 137h2M93 138h2M399 138h2M89 139h2M330 139h3M409 139h2M84 140h2M324 140h6M402 140h2M92 141h2M320 141h4M406 141h2M87 142h2M403 143h2M90 144h2M413 145h2M80 146h2M411 146h2M82 147h2M84 148h2M408 148h2M414 148h2M78 149h2M86 149h2M406 149h2M80 150h2M411 150h2M417 150h2M82 151h2M415 151h2M77 152h2M84 152h2M408 152h2M413 152h2M79 153h2M86 153h2M411 153h2M419 153h2M81 154h2M409 154h2M417 154h2M75 155h2M83 155h2M415 155h2M77 156h2M413 156h2M79 157h2M411 157h2M81 158h2M422 159h2M420 160h2M72 161h2M418 161h2M74 162h2M416 162h2M423 162h2M76 163h2M414 163h2M421 163h2M70 164h2M78 164h2M419 164h2M72 165h2M417 165h2M425 165h2M74 166h2M415 166h2M423 166h2M69 167h2M76 167h2M421 167h2M71 168h2M78 168h2M419 168h2M426 168h2M66 169h2M73 169h2M417 169h2M424 169h2M68 170h2M75 170h2M422 170h2M70 171h2M420 171h2M72 172h2M418 172h2M74 173h2M429 175h2M64 176h2M427 176h2M66 177h2M424 177h3M68 178h3M422 178h2M430 178h2M62 179h2M71 179h2M420 179h2M428 179h2M64 180h3M73 180h2M425 180h3M67 181h2M423 181h2M431 181h2M61 182h2M69 182h3M421 182h2M429 182h2M63 183h3M426 183h3M66 184h2M424 184h2M60 185h2M68 185h3M422 185h2M430 185h3M62 186h3M428 186h2M65 187h2M425 187h3M67 188h3M423 188h2M435 191h2M58 192h2M431 192h4M60 193h4M427 193h4M64 194h4M425 194h2M57 195h2M432 195h4M59 196h4M428 196h4M63 197h4M426 197h2M56 198h2M435 198h3M58 199h4M430 199h5M62 200h4M427 200h3M66 201h2M437 201h2M55 202h3M433 202h4M58 203h6M430 203h3M64 204h3M428 204h2M438 208h3M54 209h3M432 209h6M57 210h6M429 210h3M63 211h2M438 211h3M53 212h3M433 212h5M56 213h6M430 213h3M62 214h3M53 215h3M436 215h6M56 216h6M430 216h6M62 217h2M440 218h3M52 219h6M434 219h6M58 220h6M431 220h3M438 225h6M51 226h6M432 226h6M57 227h6M438 228h6M51 229h6M432 229h6M57 230h6M51 232h6M438 232h6M57 233h5M433 233h5M438 235h6M50 236h6M433 236h5M56 237h6M433 242h12M50 243h12M433 245h12M50 246h12M433 248h12M50 249h12M433 251h12M50 252h12M433 257h5M57 258h5M438 258h7M51 259h6M57 261h6M432 261h6M51 262h6M438 262h6M432 264h6M57 265h6M438 265h6M51 266h6M432 267h6M57 268h6M438 268h6M51 269h6M61 274h3M431 274h6M55 275h6M437 275h6M52 276h3M431 277h2M59 278h6M433 278h6M53 279h6M439 279h3M430 280h3M62 281h3M433 281h6M57 282h5M439 282h3M54 283h3M430 283h2M63 284h3M432 284h6M57 285h6M438 285h3M54 286h3M65 290h2M428 290h3M61 291h4M431 291h6M58 292h3M437 292h3M56 293h2M427 293h2M65 294h3M429 294h4M60 295h5M433 295h4M57 296h3M437 296h2M67 297h2M428 297h4M63 298h4M432 298h4M59 299h4M436 299h2M68 300h2M427 300h4M64 301h4M431 301h4M60 302h4M435 302h2M70 306h2M425 306h3M67 307h3M428 307h2M65 308h2M430 308h3M62 309h3M71 309h2M424 309h3M433 309h2M69 310h2M427 310h2M66 311h3M429 311h3M64 312h2M72 312h2M423 312h3M432 312h2M62 313h2M70 313h2M426 313h2M67 314h3M420 314h2M428 314h3M65 315h2M73 315h2M422 315h2M431 315h2M63 316h2M71 316h2M424 316h3M68 317h3M427 317h2M66 318h2M429 318h2M64 319h2M76 321h2M419 321h2M74 322h2M421 322h2M72 323h2M423 323h2M70 324h2M77 324h2M417 324h2M425 324h2M68 325h2M75 325h2M419 325h2M427 325h2M73 326h2M421 326h2M71 327h2M416 327h2M423 327h2M69 328h2M77 328h2M418 328h2M425 328h2M75 329h2M420 329h2M73 330h2M80 330h2M414 330h2M422 330h2M71 331h2M78 331h2M416 331h2M424 331h2M76 332h2M418 332h2M74 333h2M420 333h2M72 334h2M422 334h2M83 336h2M411 336h2M81 337h2M413 337h2M79 338h2M415 338h2M77 339h2M410 339h2M417 339h2M75 340h2M83 340h2M412 340h2M419 340h2M81 341h2M414 341h2M79 342h2M85 342h2M408 342h2M416 342h2M77 343h2M410 343h2M82 344h2M412 344h2M87 345h2M407 345h2M414 345h2M79 346h2M85 346h2M409 346h2M416 346h2M411 347h2M82 348h2M413 348h2M80 349h2M403 350h2M90 351h2M406 352h2M87 353h2M401 353h2M91 354h2M409 354h2M84 355h2M404 355h2M94 356h2M400 356h2M87 357h2M407 357h2M91 358h2M96 359h2M398 359h2M404 359h2M88 360h2M93 361h2M402 362h2M90 363h2M99 365h2M397 366h2M101 367h2M392 367h2M95 368h2M390 369h2M97 370h2M396 370h2M102 371h2M388 372h2M394 372h2M392 375h2M58 300h1M59 303h1M61 310h1M67 198h1M67 326h1M68 166h1M68 195h1M68 329h1M69 163h1M70 189h1M70 332h1M71 160h1M71 186h1M71 335h1M72 183h1M74 154h1M74 341h1M76 151h1M76 174h1M76 344h1M77 148h1M77 171h1M78 347h1M79 145h1M79 327h1M79 350h1M80 165h1M81 345h1M83 139h1M83 159h1M83 356h1M84 343h1M84 347h1M85 136h1M85 156h1M85 339h1M85 359h1M86 141h1M86 354h1M86 358h1M87 133h1M87 341h1M87 361h1M88 134h1M88 138h1M88 150h1M89 130h1M89 143h1M89 352h1M89 356h1M89 364h1M90 131h1M90 355h1M90 359h1M91 136h1M91 140h1M92 137h1M92 145h1M92 350h1M92 362h1M93 125h1M93 133h1M93 353h1M93 357h1M93 370h1M94 126h1M94 134h1M94 142h1M94 352h1M94 369h1M95 122h1M95 127h1M95 139h1M95 360h1M95 372h1M96 123h1M96 128h1M96 355h1M96 371h1M97 120h1M97 136h1M97 367h1M98 121h1M98 358h1M98 366h1M98 375h1M99 117h1M99 125h1M99 130h1M99 369h1M99 374h1M100 118h1M100 126h1M100 131h1M100 368h1M100 373h1M100 378h1M101 123h1M101 132h1M101 364h1M101 372h1M101 377h1M102 124h1M102 363h1M102 376h1M103 120h1M103 128h1M103 366h1M103 375h1M104 112h1M104 121h1M104 370h1M104 374h1M105 113h1M105 126h1M105 369h1M105 373h1M105 383h1M106 114h1M106 368h1M106 372h1M106 382h1M107 110h1M107 115h1M107 123h1M107 371h1M107 381h1M107 385h1M108 111h1M108 116h1M108 124h1M108 370h1M108 380h1M108 384h1M109 107h1M109 112h1M109 117h1M109 167h1M109 325h1M109 379h1M109 383h1M110 108h1M110 113h1M110 118h1M110 378h1M110 382h1M110 387h1M111 105h1M111 109h1M111 114h1M111 119h1M111 168h1M111 324h1M111 377h1M111 381h1M111 386h1M112 106h1M112 110h1M112 115h1M112 120h1M112 376h1M112 380h1M112 385h1M112 390h1M113 107h1M113 111h1M113 116h1M113 169h1M113 323h1M113 375h1M113 379h1M113 384h1M113 389h1M114 108h1M114 112h1M114 117h1M114 378h1M114 383h1M114 388h1M115 109h1M115 113h1M115 170h1M115 322h1M115 382h1M115 387h1M116 100h1M116 110h1M116 114h1M116 381h1M116 386h1M117 101h1M117 111h1M117 172h1M117 321h1M117 380h1M117 385h1M117 395h1M118 102h1M118 112h1M118 384h1M118 394h1M119 98h1M119 103h1M119 113h1M119 173h1M119 320h1M119 383h1M120 99h1M120 104h1M120 382h1M120 391h1M120 397h1M121 100h1M121 105h1M121 174h1M121 319h1M121 390h1M121 396h1M122 95h1M122 101h1M122 106h1M122 399h1M123 96h1M123 107h1M123 175h1M123 317h1M123 387h1M123 393h1M123 398h1M124 93h1M124 104h1M124 108h1M124 386h1M124 392h1M125 94h1M125 99h1M125 105h1M125 176h1M125 316h1M125 395h1M125 401h1M126 100h1M126 106h1M126 389h1M126 394h1M126 400h1M127 97h1M127 177h1M127 315h1M127 399h1M128 98h1M128 103h1M128 391h1M129 179h1M129 314h1M129 396h1M130 89h1M130 101h1M130 395h1M130 405h1M131 102h1M131 180h1M131 313h1M131 394h1M131 404h1M132 92h1M132 393h1M133 87h1M133 181h1M133 312h1M133 401h1M133 407h1M134 95h1M134 400h1M134 406h1M135 85h1M135 90h1M135 182h1M135 311h1M136 86h1M136 98h1M136 397h1M136 403h1M136 409h1M137 93h1M137 183h1M137 310h1M137 402h1M138 83h1M138 89h1M138 406h1M139 90h1M139 96h1M139 184h1M139 308h1M139 399h1M139 411h1M140 86h1M140 403h1M141 93h1M141 186h1M141 307h1M141 408h1M142 89h1M142 94h1M142 400h1M143 187h1M143 306h1M143 405h1M144 79h1M144 92h1M145 188h1M145 305h1M145 402h1M145 415h1M147 78h1M147 84h1M147 189h1M147 304h1M149 81h1M149 190h1M149 303h1M149 345h1M150 76h1M150 344h1M150 406h1M151 84h1M151 191h1M151 302h1M151 343h1M151 418h1M152 342h1M153 74h1M153 87h1M153 193h1M153 300h1M153 341h1M154 340h1M155 194h1M155 299h1M155 339h1M156 338h1M156 409h1M157 195h1M157 298h1M159 71h1M159 196h1M159 297h1M161 197h1M161 296h1M162 70h1M163 198h1M163 295h1M165 68h1M165 294h1M166 385h1M167 79h1M167 201h1M167 292h1M167 383h1M168 67h1M168 381h1M168 415h1M169 109h1M169 202h1M169 291h1M170 111h1M170 379h1M171 113h1M171 203h1M171 290h1M171 377h1M172 115h1M172 375h1M173 117h1M173 204h1M173 289h1M173 373h1M174 119h1M174 371h1M174 418h1M175 121h1M175 205h1M175 288h1M175 369h1M177 123h1M177 206h1M177 287h1M177 367h1M178 125h1M178 365h1M179 127h1M179 208h1M179 286h1M179 363h1M180 129h1M180 361h1M181 131h1M181 209h1M181 285h1M181 359h1M182 133h1M182 357h1M183 135h1M183 210h1M183 283h1M183 422h1M184 61h1M184 137h1M184 355h1M185 211h1M185 353h1M186 139h1M186 351h1M186 423h1M187 141h1M187 281h1M187 349h1M188 143h1M188 347h1M189 145h1M189 213h1M189 280h1M189 345h1M189 424h1M190 147h1M191 149h1M191 215h1M191 279h1M191 343h1M192 151h1M192 341h1M193 216h1M193 278h1M193 339h1M194 58h1M194 153h1M194 337h1M195 155h1M195 217h1M195 335h1M195 426h1M196 157h1M197 159h1M197 218h1M197 275h1M197 333h1M198 161h1M198 331h1M198 427h1M199 163h1M199 219h1M199 274h1M199 329h1M200 165h1M200 327h1M201 220h1M201 273h1M201 325h1M202 323h1M203 169h1M203 221h1M203 272h1M204 171h1M204 321h1M205 223h1M205 271h1M205 319h1M206 175h1M207 177h1M207 224h1M207 270h1M207 315h1M208 179h1M208 313h1M209 181h1M209 225h1M209 269h1M209 311h1M211 183h1M211 226h1M211 267h1M211 309h1M212 185h1M212 307h1M213 187h1M213 227h1M213 266h1M213 305h1M214 189h1M214 303h1M215 191h1M215 228h1M215 265h1M215 301h1M216 193h1M216 299h1M217 195h1M217 230h1M217 264h1M218 297h1M219 197h1M219 231h1M219 263h1M219 295h1M220 199h1M220 293h1M221 201h1M221 232h1M221 262h1M221 291h1M222 203h1M222 289h1M223 205h1M223 233h1M223 261h1M224 207h1M224 287h1M225 209h1M225 234h1M225 260h1M225 285h1M226 283h1M227 211h1M227 235h1M227 258h1M227 281h1M228 213h1M228 279h1M229 215h1M229 237h1M229 257h1M229 277h1M230 217h1M231 219h1M231 238h1M231 256h1M231 275h1M232 221h1M232 273h1M233 223h1M233 239h1M233 255h1M233 271h1M234 225h1M234 269h1M235 240h1M235 254h1M235 267h1M236 227h1M236 265h1M237 229h1M237 241h1M237 253h1M238 231h1M238 263h1M239 233h1M239 242h1M239 252h1M239 261h1M240 235h1M240 259h1M241 237h1M241 244h1M241 250h1M241 257h1M242 239h1M242 255h1M243 245h1M243 249h1M243 253h1M244 241h1M245 243h1M245 246h1M245 248h1M245 251h1M246 245h1M246 249h1M247 247h1M248 245h1M248 249h1M249 243h1M249 246h1M249 248h1M249 251h1M250 253h1M251 241h1M251 245h1M251 249h1M252 239h1M252 255h1M253 237h1M253 244h1M253 250h1M253 257h1M254 235h1M254 259h1M255 233h1M255 242h1M255 252h1M255 261h1M256 231h1M256 263h1M257 241h1M257 253h1M257 265h1M258 229h1M258 267h1M259 227h1M259 240h1M259 254h1M260 225h1M260 269h1M261 223h1M261 239h1M261 255h1M261 271h1M262 221h1M262 273h1M263 219h1M263 238h1M263 256h1M263 275h1M264 277h1M265 217h1M265 237h1M265 257h1M265 279h1M266 215h1M266 281h1M267 213h1M267 236h1M267 259h1M267 283h1M268 211h1M269 209h1M269 234h1M269 260h1M269 285h1M270 207h1M270 287h1M271 233h1M271 261h1M271 289h1M272 205h1M272 291h1M273 203h1M273 232h1M273 262h1M273 293h1M274 201h1M274 295h1M275 199h1M275 231h1M275 263h1M275 297h1M276 197h1M277 230h1M277 264h1M277 299h1M278 195h1M278 301h1M279 193h1M279 229h1M279 266h1M279 303h1M280 191h1M280 305h1M281 189h1M281 228h1M281 267h1M281 307h1M282 187h1M282 309h1M283 185h1M283 227h1M283 268h1M283 311h1M285 183h1M285 225h1M285 269h1M285 313h1M286 181h1M286 315h1M287 179h1M287 224h1M287 270h1M287 317h1M288 177h1M288 319h1M289 175h1M289 223h1M289 271h1M289 321h1M290 173h1M290 323h1M291 222h1M291 273h1M291 325h1M292 171h1M292 327h1M293 169h1M293 221h1M293 274h1M294 167h1M294 329h1M295 165h1M295 220h1M295 275h1M295 331h1M296 67h1M296 163h1M296 333h1M297 161h1M297 219h1M297 276h1M297 335h1M298 337h1M299 68h1M299 159h1M299 217h1M299 277h1M299 339h1M300 157h1M300 341h1M300 436h1M301 155h1M301 216h1M301 278h1M302 153h1M302 343h1M303 151h1M303 215h1M303 279h1M303 345h1M303 435h1M304 347h1M305 70h1M305 149h1M305 214h1M305 281h1M305 349h1M305 362h1M306 147h1M306 351h1M307 145h1M307 282h1M307 353h1M307 365h1M308 71h1M308 143h1M308 355h1M309 141h1M309 212h1M309 283h1M310 139h1M310 357h1M310 370h1M310 433h1M311 72h1M311 211h1M311 359h1M312 137h1M312 361h1M313 135h1M313 209h1M313 285h1M313 363h1M314 133h1M314 365h1M315 131h1M315 286h1M315 367h1M316 129h1M316 369h1M317 127h1M317 207h1M317 288h1M317 371h1M319 125h1M319 206h1M319 289h1M319 373h1M320 76h1M320 123h1M321 121h1M321 205h1M321 290h1M321 377h1M321 417h1M322 119h1M322 379h1M323 77h1M323 117h1M323 204h1M323 291h1M323 381h1M324 115h1M324 383h1M324 416h1M325 203h1M325 292h1M325 385h1M326 113h1M327 111h1M327 202h1M327 293h1M328 68h1M328 109h1M329 80h1M329 200h1M329 295h1M330 413h1M331 69h1M331 199h1M331 296h1M333 198h1M333 297h1M334 71h1M335 197h1M335 298h1M336 410h1M337 196h1M337 299h1M338 85h1M339 195h1M339 300h1M339 408h1M340 74h1M341 86h1M341 194h1M341 301h1M341 407h1M343 76h1M343 192h1M343 303h1M343 410h1M344 88h1M345 191h1M345 304h1M345 413h1M346 77h1M347 190h1M347 305h1M347 410h1M347 416h1M349 79h1M349 92h1M349 189h1M349 306h1M350 402h1M350 415h1M351 89h1M351 188h1M351 307h1M352 94h1M352 400h1M352 405h1M353 86h1M353 187h1M353 308h1M353 401h1M354 91h1M354 408h1M355 83h1M355 95h1M355 186h1M355 310h1M355 398h1M355 404h1M356 88h1M356 405h1M356 411h1M357 92h1M357 184h1M357 311h1M357 401h1M358 85h1M358 91h1M358 97h1M358 396h1M358 408h1M359 183h1M359 312h1M359 404h1M359 409h1M360 88h1M360 94h1M360 399h1M361 87h1M361 93h1M361 182h1M361 313h1M361 407h1M362 101h1M362 402h1M363 90h1M363 100h1M363 181h1M363 314h1M363 392h1M364 89h1M364 99h1M364 393h1M364 405h1M365 180h1M365 315h1M366 96h1M366 103h1M366 391h1M366 396h1M367 95h1M367 179h1M367 317h1M367 397h1M368 94h1M368 100h1M368 105h1M368 388h1M368 394h1M369 93h1M369 99h1M369 178h1M369 318h1M369 389h1M369 395h1M369 400h1M370 102h1M370 108h1M370 386h1M370 390h1M370 401h1M371 96h1M371 101h1M371 107h1M371 177h1M371 319h1M371 387h1M371 391h1M371 398h1M372 95h1M372 388h1M372 399h1M373 98h1M373 104h1M373 175h1M373 320h1M373 389h1M373 394h1M374 97h1M374 103h1M374 112h1M374 390h1M374 395h1M375 111h1M375 174h1M375 321h1M375 381h1M375 391h1M375 396h1M376 100h1M376 110h1M376 382h1M376 392h1M377 99h1M377 109h1M377 114h1M377 173h1M377 322h1M377 383h1M377 393h1M378 108h1M378 113h1M378 380h1M378 384h1M378 394h1M379 107h1M379 112h1M379 172h1M379 324h1M379 381h1M379 385h1M380 106h1M380 111h1M380 116h1M380 377h1M380 382h1M380 386h1M381 105h1M381 110h1M381 115h1M381 119h1M381 171h1M381 325h1M381 378h1M381 383h1M381 387h1M382 104h1M382 109h1M382 114h1M382 118h1M382 374h1M382 379h1M382 384h1M382 388h1M383 108h1M383 113h1M383 117h1M383 170h1M383 326h1M383 375h1M383 380h1M383 385h1M383 389h1M384 107h1M384 112h1M384 116h1M384 376h1M384 381h1M384 386h1M385 111h1M385 115h1M385 169h1M385 327h1M385 377h1M385 382h1M385 387h1M386 110h1M386 114h1M386 124h1M386 370h1M386 378h1M386 383h1M387 109h1M387 113h1M387 123h1M387 371h1M387 379h1M387 384h1M388 112h1M388 122h1M388 126h1M388 380h1M389 111h1M389 121h1M389 125h1M389 368h1M389 381h1M390 120h1M390 124h1M390 373h1M390 382h1M391 119h1M391 123h1M391 128h1M391 366h1M391 374h1M392 118h1M392 131h1M392 370h1M393 117h1M393 130h1M393 362h1M393 371h1M394 116h1M394 121h1M394 126h1M394 363h1M394 368h1M394 376h1M395 120h1M395 125h1M395 364h1M395 369h1M395 377h1M396 119h1M396 128h1M396 136h1M396 365h1M396 373h1M397 127h1M397 358h1M397 374h1M398 123h1M398 139h1M398 371h1M399 122h1M399 134h1M399 355h1M399 367h1M399 372h1M400 125h1M400 142h1M400 352h1M400 360h1M400 368h1M401 124h1M401 137h1M401 141h1M401 361h1M401 369h1M402 132h1M402 144h1M402 349h1M402 357h1M403 354h1M403 358h1M404 135h1M404 139h1M404 363h1M405 130h1M405 138h1M405 142h1M405 351h1M405 364h1M406 344h1M406 356h1M406 360h1M407 133h1M407 153h1M407 341h1M407 361h1M408 136h1M408 140h1M408 353h1M409 135h1M409 338h1M409 358h1M410 147h1M410 151h1M410 158h1M410 335h1M411 138h1M411 355h1M413 149h1M413 164h1M415 144h1M415 326h1M415 349h1M416 147h1M416 170h1M417 173h1M418 320h1M418 343h1M422 311h1M423 308h1M424 305h1M426 299h1M427 296h1M433 184h1M436 194h1"/>
<path stroke="#ffff00" d="M289 30h2M296 30h2M291 31h5M289 32h2M296 32h2M319 39h3M289 42h2M296 42h2M291 43h5M319 43h3M318 45h5M224 72h5M228 74h2M207 75h3M226 75h2M199 76h2M198 83h5M207 83h3M252 90h4M240 91h2M247 91h2M305 103h5M252 106h4M305 111h5M303 115h9M247 123h3M645 128h3M304 138h3M122 153h9M130 157h3M126 159h3M646 166h2M640 167h2M644 167h2M646 169h2M147 174h3M643 208h3M643 214h3M418 221h3M418 225h3M417 227h5M643 276h3M643 280h3M642 282h5M413 288h4M412 292h4M413 296h3M45 307h2M641 307h5M42 309h2M645 309h2M643 310h2M108 348h3M108 352h3M107 354h5M123 365h3M122 373h5M647 376h2M640 377h2M643 377h2M80 383h3M647 384h2M411 385h3M407 386h2M80 387h3M399 387h3M79 389h5M411 391h3M384 410h5M388 412h2M386 413h2M32 304h1M33 305h1M35 305h1M36 304h1M37 305h1M39 305h1M40 304h1M41 305h1M42 320h1M43 317h1M43 319h1M44 308h1M44 318h1M45 317h1M45 319h1M46 306h1M46 320h1M81 388h1M109 353h1M122 366h1M122 372h1M123 371h1M124 370h1M125 369h1M129 158h1M133 158h1M133 162h1M133 166h1M134 167h1M148 173h1M148 175h1M198 77h1M200 75h1M226 71h1M230 79h1M240 90h1M242 92h1M243 93h1M245 93h1M246 92h1M248 90h1M248 122h1M248 124h1M287 27h1M299 27h1M304 104h1M304 110h1M304 143h1M305 137h1M305 139h1M307 144h1M310 104h1M310 110h1M313 148h1M320 44h1M386 409h1M390 417h1M402 394h1M404 394h1M406 388h1M407 385h1M407 387h1M408 388h1M409 387h1M409 389h1M410 386h1M410 390h1M412 392h1M413 393h1M413 401h1M414 386h1M414 390h1M414 394h1M414 400h1M419 226h1M640 376h1M641 166h1M641 206h1M642 126h1M642 207h1M642 209h1M642 213h1M643 306h1M644 126h1M644 166h1M644 281h1M644 376h1M645 127h1M645 134h1M645 168h1M646 133h1M646 207h1M646 209h1M646 213h1M647 127h1M647 134h1M647 170h1M647 174h1M647 206h1M647 314h1"/>
<path stroke="#0000ff" d="M105 77h3M108 78h2M108 84h2M105 85h3M85 94h5M82 95h3M91 96h3M81 100h3M91 102h3M81 106h3M90 107h3M85 108h5M369 121h3M369 125h3M369 129h3M141 131h5M146 132h2M384 142h3M383 144h5M146 146h2M141 147h5M646 154h2M161 157h3M83 178h2M86 178h3M90 178h2M86 181h3M446 182h17M85 183h5M640 190h9M83 198h3M75 199h2M74 206h5M82 206h5M456 206h2M459 206h3M463 206h2M459 209h3M458 211h5M643 227h3M641 228h2M646 228h2M641 230h2M646 231h2M641 233h2M646 233h2M643 234h3M642 256h3M645 257h2M645 263h2M642 264h3M368 268h3M385 273h3M390 273h5M397 273h3M388 278h2M395 278h2M390 279h5M388 283h9M640 327h2M643 327h3M647 327h2M643 330h3M642 332h5M643 340h3M642 342h5M302 357h3M245 371h3M313 371h3M313 375h3M310 378h2M317 378h2M312 379h5M310 383h9M238 388h9M250 388h4M238 404h9M250 404h4M265 415h3M268 416h2M288 416h5M268 422h2M265 423h3M173 451h3M172 453h5M207 463h3M205 467h2M74 200h1M76 198h1M79 98h1M80 97h1M80 101h1M80 105h1M81 96h1M82 199h1M82 205h1M83 204h1M84 101h1M84 105h1M84 107h1M84 177h1M84 179h1M84 203h1M85 180h1M85 202h1M87 177h1M87 182h1M89 180h1M90 95h1M90 97h1M90 101h1M90 177h1M90 179h1M93 106h1M94 97h1M94 101h1M94 105h1M95 104h1M104 78h1M104 84h1M105 79h1M105 83h1M109 79h1M109 83h1M139 133h1M139 145h1M140 132h1M140 134h1M140 144h1M140 146h1M141 135h1M141 143h1M148 133h1M148 145h1M149 134h1M149 144h1M162 156h1M162 158h1M172 450h1M173 448h1M174 447h1M174 449h1M174 452h1M175 448h1M176 450h1M193 451h1M194 452h1M196 452h1M197 451h1M198 452h1M200 452h1M201 451h1M202 452h1M204 466h1M207 466h1M208 462h1M246 370h1M246 372h1M264 416h1M264 422h1M265 417h1M265 421h1M269 417h1M269 421h1M303 356h1M303 358h1M369 269h1M383 141h1M384 139h1M385 138h1M385 140h1M385 143h1M386 139h1M387 141h1M446 174h1M446 190h1M447 175h1M447 189h1M448 176h1M448 188h1M457 205h1M457 207h1M458 208h1M460 176h1M460 188h1M460 205h1M460 210h1M461 175h1M461 189h1M462 174h1M462 190h1M462 208h1M463 205h1M463 207h1M640 146h1M640 186h1M640 194h1M640 229h1M641 187h1M641 193h1M641 257h1M641 263h1M641 326h1M641 328h1M642 146h1M642 258h1M642 262h1M642 329h1M642 339h1M643 337h1M644 146h1M644 326h1M644 331h1M644 336h1M644 338h1M644 341h1M645 337h1M646 258h1M646 262h1M646 329h1M646 339h1M647 187h1M647 193h1M647 326h1M647 328h1M648 186h1M648 194h1M648 232h1"/>
<path stroke="#007f7f" d="M337 123h5M333 135h3M343 135h3M316 145h3M643 346h3M641 352h2M646 352h2M643 357h3M643 363h3M215 367h3M208 385h5M208 397h5M205 388h1M205 394h1M206 387h1M206 395h1M207 386h1M207 388h1M207 394h1M207 396h1M208 389h1M208 393h1M209 390h1M209 392h1M210 391h1M211 390h1M211 392h1M212 389h1M212 393h1M213 386h1M213 388h1M213 394h1M213 396h1M214 387h1M214 395h1M215 388h1M215 394h1M216 366h1M216 368h1M317 144h1M317 146h1M331 137h1M332 136h1M332 138h1M333 139h1M334 126h1M334 132h1M334 138h1M335 125h1M336 124h1M342 124h1M343 125h1M344 126h1M344 132h1M344 138h1M345 139h1M346 136h1M346 138h1M347 137h1M640 353h1M641 354h1M642 347h1M642 351h1M642 353h1M642 358h1M642 362h1M643 359h1M643 361h1M644 360h1M645 359h1M645 361h1M646 347h1M646 351h1M646 353h1M646 358h1M646 362h1M647 354h1M648 353h1"/>
<path stroke="#00ffff" d="M304 349h1M307 345h1M310 341h1M312 150h1M312 337h1M314 154h1M315 158h1M315 333h1M317 162h1M318 329h1M319 166h1M321 170h1M321 325h1M323 174h1M324 321h1M325 178h1M326 182h1M327 317h1M328 186h1M330 190h1M330 313h1M332 194h1M332 309h1M334 198h1M335 202h1M335 305h1M337 206h1M338 301h1M339 210h1M341 214h1M341 297h1M343 218h1M344 222h1M344 293h1M346 226h1M347 289h1M348 230h1M350 234h1M350 285h1M352 238h1M353 281h1M354 242h1M355 246h1M355 277h1M357 250h1M358 273h1M359 254h1M361 258h1M361 269h1M363 262h1"/>
</g>
<g transform="translate(0.5,0)">
<path stroke="#bfbfbf" d="M0 1v494M245 434v11M245 446v36M245 483v10M246 309v56M246 366v4M246 373v3M246 389v15M246 405v2M246 420v11M247 187v60M247 248v56M247 305v4M248 64v10M248 88v2M248 119v3M248 125v35M248 161v19M248 181v5M249 2v10M249 13v36M249 50v11M495 1v494M655 1v494"/>
<path stroke="#ffffff" d="M12 233v24M12 258v3M13 221v12M13 261v12M14 213v8M14 273v8M15 209v4M15 281v4M16 201v8M16 285v8M17 197v4M17 293v4M18 193v4M18 297v4M19 189v4M19 301v4M20 185v4M20 305v4M21 181v4M21 309v4M22 178v3M22 313v3M23 176v2M23 316v2M24 173v3M24 318v3M25 169v4M25 321v4M26 166v3M26 325v3M27 164v2M27 328v2M28 161v3M28 330v3M29 158v3M29 333v3M30 156v2M30 336v2M31 154v2M31 338v3M32 151v3M32 341v2M33 149v2M33 343v2M34 147v2M34 345v2M35 145v2M35 347v2M36 349v2M37 142v2M37 351v2M39 354v2M40 136v2M40 356v2M41 134v2M41 358v2M42 360v2M43 131v2M43 362v2M44 129v2M45 127v2M45 365v2M46 367v2M47 124v2M47 369v2M48 122v2M49 120v2M49 232v7M49 240v16M49 257v5M50 222v10M50 262v11M51 117v2M51 215v7M51 274v6M51 376v2M52 212v3M52 280v3M53 114v2M53 205v7M53 283v7M54 201v4M54 291v2M54 380v2M55 198v3M55 293v4M56 110v2M56 195v3M56 297v3M56 383v2M57 191v4M57 300v3M58 107v2M58 303v3M58 386v2M59 185v3M59 307v3M60 182v3M60 310v3M61 178v4M61 313v3M62 102v2M62 175v3M62 233v7M62 241v6M62 248v7M62 256v5M62 316v4M63 100v2M63 173v2M63 225v8M63 261v10M63 320v2M63 392v2M64 217v7M64 272v6M64 394v2M65 169v2M65 211v6M65 278v6M65 324v2M66 167v2M66 209v2M66 284v3M66 326v2M67 165v2M67 205v3M67 288v2M67 328v2M68 162v3M68 198v7M68 290v7M68 330v2M69 160v2M69 195v3M69 297v3M69 332v3M70 158v2M70 193v2M70 300v3M70 335v2M71 91v2M71 189v3M71 304v2M71 337v2M71 402v2M72 154v2M72 186v3M72 306v3M72 339v2M73 152v2M73 183v3M73 309v3M73 341v2M74 181v2M74 312v2M75 149v2M75 179v2M75 314v2M75 344v2M76 147v2M76 316v2M76 346v2M77 145v2M77 174v3M77 319v2M77 348v2M78 143v2M78 171v3M78 321v3M78 350v2M79 169v2M79 324v2M80 140v2M80 167v2M80 326v2M81 165v2M81 328v2M82 163v2M82 330v2M84 135v2M84 159v2M84 358v2M85 335v2M86 132v2M86 156v2M86 235v12M86 248v12M86 361v2M87 227v8M87 260v8M88 129v2M88 152v2M88 218v9M88 268v8M88 341v2M88 364v2M89 150v2M89 216v2M89 276v3M89 343v2M90 126v2M90 210v6M90 279v6M91 207v3M91 285v2M91 346v2M92 202v5M92 287v6M93 199v3M93 293v2M94 121v2M94 197v2M94 295v3M94 372v2M95 142v2M95 194v3M95 298v3M95 351v2M96 140v2M96 191v3M96 301v2M96 353v2M97 138v2M97 189v2M97 303v3M97 355v2M98 186v3M98 306v3M99 183v3M99 309v2M100 181v2M100 311v3M100 359v2M101 178v3M101 314v2M102 316v2M103 175v2M103 318v2M104 129v2M104 173v2M104 364v2M105 171v2M105 321v3M106 108v2M106 169v2M106 324v2M106 385v2M109 124v2M109 164v2M109 329v2M109 369v2M111 103v2M111 161v2M111 390v2M112 333v2M113 158v2M113 335v2M114 156v2M115 117v2M115 338v2M115 376v2M118 106v2M118 151v2M118 342v2M119 149v2M120 345v2M121 50v2M123 53v2M125 56v2M126 141v2M126 352v2M127 59v2M127 106v2M127 139v2M127 354v2M127 387v2M129 62v2M129 93v2M129 401v2M131 65v2M132 67v2M132 97v2M132 397v2M134 70v2M136 73v2M138 76v2M141 452v2M142 82v2M142 450v2M143 84v2M143 411v2M143 448v2M144 446v2M145 87v2M145 408v2M145 444v2M146 89v2M146 442v2M147 405v2M147 440v2M149 437v2M150 435v2M151 433v2M152 431v2M153 429v2M154 427v2M155 403v2M155 425v2M156 150v2M157 74v2M157 400v2M157 421v2M158 76v2M158 88v2M158 398v2M158 419v2M159 78v2M159 90v2M159 396v2M159 417v2M160 80v2M160 92v2M160 415v2M161 94v2M161 393v2M161 413v2M162 96v2M162 391v2M163 98v2M164 100v2M164 388v2M165 102v2M166 104v2M172 65v2M172 428v2M173 67v3M173 426v2M174 70v2M174 424v2M175 72v3M175 422v2M176 420v2M189 61v4M189 434v2M190 65v4M190 430v4M191 426v4M204 55v2M205 57v4M205 438v2M206 61v4M206 434v4M207 430v4M212 380v2M213 376v4M214 373v3M215 371v2M221 52v3M222 55v6M222 440v3M223 61v2M223 434v6M224 432v2M237 13v18M238 31v18M238 50v6M239 56v6M239 439v6M240 433v6M245 420v12M246 376v11M246 409v11M248 74v12M248 108v11M249 63v11M254 56v6M255 50v6M255 433v6M256 439v6M256 446v17M257 463v19M270 61v2M271 55v6M271 432v2M272 52v3M272 434v6M273 440v3M287 61v4M288 57v4M288 430v4M289 55v2M289 434v4M290 438v2M303 65v4M303 121v2M304 61v4M304 123v3M304 426v4M305 59v2M305 126v4M305 430v4M306 130v3M307 133v2M315 137v2M316 135v2M317 74v2M317 133v2M318 72v2M318 131v2M319 70v2M319 129v2M319 420v3M320 68v2M320 423v2M321 66v2M321 425v3M322 428v2M328 389v2M329 391v2M330 105v2M330 393v2M331 395v2M332 102v2M332 397v2M333 79v2M333 100v2M333 399v2M334 77v2M334 98v2M334 401v2M334 413v2M335 75v2M335 403v2M335 415v2M336 73v2M336 95v2M336 405v2M336 417v2M337 93v2M337 419v2M339 68v2M339 90v2M340 66v2M341 64v2M342 62v2M343 60v2M344 58v2M345 56v2M347 53v2M347 88v2M348 51v2M348 404v2M349 49v2M349 85v2M349 406v2M350 47v2M351 45v2M351 82v2M351 409v2M352 43v2M352 411v2M353 41v2M356 417v2M358 420v2M360 423v2M361 97v2M362 396v2M362 426v2M364 93v2M364 429v2M365 400v2M365 431v2M367 106v2M367 139v2M367 354v2M367 387v2M367 434v2M368 141v2M368 352v2M369 437v2M371 440v2M374 345v2M375 149v2M376 151v2M376 342v2M377 388v2M379 117v2M379 338v2M379 376v2M380 156v2M381 158v2M381 335v2M382 333v2M383 103v2M383 161v2M383 390v2M385 124v2M385 164v2M385 329v2M385 369v2M388 108v2M388 169v2M388 324v2M388 385v2M389 171v2M389 321v3M390 129v2M390 173v2M390 364v2M391 175v2M391 318v2M392 316v2M393 178v3M393 314v2M394 134v2M394 181v2M394 311v3M395 183v3M395 309v2M396 186v3M396 306v3M397 138v2M397 189v2M397 303v3M397 355v2M398 140v2M398 191v3M398 301v2M398 353v2M399 142v2M399 194v3M399 298v3M399 351v2M400 121v2M400 197v2M400 295v3M400 372v2M401 199v3M401 293v2M402 202v5M402 287v6M403 147v2M403 207v3M403 285v2M404 210v6M404 279v6M404 367v2M405 150v2M405 216v2M405 276v3M405 343v2M406 129v2M406 152v2M406 218v9M406 268v8M406 341v2M406 364v2M407 227v8M407 260v8M408 132v2M408 235v12M408 248v12M408 337v2M408 361v2M409 335v2M410 135v2M410 159v2M410 358v2M412 163v2M412 330v2M413 165v2M413 328v2M414 167v2M414 326v2M414 353v2M415 169v2M415 324v2M416 143v2M416 171v3M416 321v3M416 350v2M417 145v2M417 174v2M417 318v3M417 348v2M418 147v2M418 177v2M418 346v2M419 149v2M419 179v2M419 314v2M419 344v2M420 181v2M420 312v2M421 152v2M421 183v3M421 309v3M421 341v2M422 154v2M422 186v3M422 306v3M422 339v2M423 91v2M423 156v2M423 189v2M423 303v3M423 402v2M424 158v2M424 192v3M424 300v2M424 335v2M425 160v2M425 195v3M425 297v3M425 332v3M426 162v3M426 198v7M426 290v7M426 330v2M427 165v2M427 205v2M427 287v3M427 328v2M428 167v2M428 208v3M428 284v2M428 326v2M429 169v2M429 211v6M429 278v6M429 324v2M430 217v6M430 271v7M430 394v2M431 100v2M431 173v2M431 224v9M431 261v9M431 320v2M431 392v2M432 102v2M432 175v3M432 233v6M432 240v7M432 248v6M432 255v6M432 316v4M433 178v4M433 313v3M434 182v3M434 310v3M435 185v3M435 307v3M436 107v2M436 189v2M436 303v2M436 386v2M437 191v4M437 300v3M438 110v2M438 195v3M438 297v3M438 383v2M439 198v3M439 293v4M440 201v3M440 290v3M440 380v2M441 114v2M441 205v7M441 283v7M442 212v3M442 280v3M443 117v2M443 215v6M443 273v7M443 376v2M444 222v10M444 262v11M444 374v2M445 232v6M445 239v16M445 256v6M445 372v2M446 122v2M447 124v2M447 369v2M448 367v2M449 127v2M449 365v2M450 129v2M451 131v2M451 362v2M452 360v2M453 134v2M453 358v2M454 136v2M454 356v2M455 138v2M456 140v2M457 142v2M457 351v2M458 349v2M459 145v2M459 347v2M460 147v2M460 345v2M461 149v2M461 343v2M462 151v3M462 341v2M463 154v2M463 338v3M464 156v2M464 336v2M465 158v3M465 333v3M466 161v3M466 330v3M467 164v2M467 328v2M468 166v3M468 325v3M469 169v4M469 321v4M470 173v3M470 318v3M471 176v2M471 316v2M472 178v3M472 313v3M473 181v4M473 309v4M474 185v4M474 305v4M475 189v4M475 301v4M476 193v4M476 297v4M477 197v4M477 293v4M478 201v8M478 285v8M479 209v4M479 281v4M480 213v8M480 273v8M481 221v12M481 261v12M482 233v4M482 238v23"/>
<path stroke="#ff0000" d="M29 197v5M31 203v3M39 173v3M39 203v3M41 197v5M47 173v3M71 270v2M76 270v2M79 289v6M90 241v6M90 248v8M94 241v6M94 248v8M97 246v3M100 251v4M103 246v9M137 355v2M138 353v2M139 351v2M140 348v3M146 346v12M146 359v2M163 303v28M164 246v57M165 190v35M165 226v20M166 162v12M166 175v15M283 460v2M284 458v2M287 457v6M291 77v3M295 77v3M295 81v3M312 87v2M313 85v2M316 84v6M316 118v5M317 116v2M317 123v2M320 448v3M331 116v2M331 123v2M332 118v5M347 384v3M355 384v3M367 367v3M371 371v3M385 81v3M387 262v5M391 81v3M392 84v4M393 88v8M394 84v4M395 81v3M397 262v5M401 81v3M403 255v4M409 108v2M414 108v2M640 197v2M640 249v3M640 291v2M640 367v3M640 371v4M641 118v3M642 121v2M642 300v2M642 367v3M642 372v2M643 197v3M643 298v2M644 200v5M645 197v3M645 291v2M646 121v2M646 297v6M646 371v2M647 118v3M648 197v2M648 249v3"/>
<path stroke="#00ff00" d="M32 283v3M36 283v3M97 405v3M105 405v3M121 122v6M129 122v6M141 106v2M143 109v2M145 106v2M178 405v3M180 35v11M180 217v2M182 405v3M186 35v11M203 411v3M203 415v3M207 32v3M211 32v3M231 309v2M301 342v2M301 345v9M302 324v2M302 327v2M302 331v3M302 335v3M302 339v3M303 296v2M303 300v2M303 303v2M303 306v2M303 309v2M303 312v7M304 273v11M304 288v2M304 291v2M304 294v2M305 250v2M305 253v3M305 257v12M305 270v2M306 227v23M307 207v20M308 181v23M309 158v23M310 146v12M365 159v5M369 166v3M369 170v2M373 159v5M387 235v15M388 211v4M388 216v2M390 222v3M391 236v13M392 213v2M392 216v5M394 222v3M394 241v4M394 246v4M396 211v4M396 216v2M400 241v3M403 246v4M405 311v3M409 311v3M413 205v3M417 200v2M449 317v2M451 320v2M453 287v3M453 297v3M453 317v2M459 287v3M459 297v3M465 287v3M465 297v3M642 139v2M642 268v3M642 317v2M643 218v5M644 320v2M646 139v2M646 218v5M646 268v3M646 317v2"/>
<path stroke="#7f7f7f" d="M119 392v2M122 388v2M122 394v2M123 102v2M124 97v2M124 396v2M125 390v2M126 95v2M127 101v2M127 392v2M128 397v2M129 99v2M131 90v2M132 402v2M133 93v2M134 88v2M135 96v2M135 398v2M135 404v2M136 91v2M137 87v2M137 407v2M138 94v2M138 400v2M139 84v2M139 404v2M140 91v2M140 409v2M141 87v2M141 401v2M142 406v2M143 90v2M144 403v2M145 80v2M146 82v2M146 413v2M147 411v2M148 79v2M148 85v2M148 409v2M148 416v2M149 87v2M149 407v2M149 414v2M150 82v2M150 412v2M151 77v2M151 410v2M152 79v2M152 85v2M152 408v2M152 416v2M153 81v2M153 414v2M154 75v2M154 83v2M154 412v2M154 419v2M155 77v2M155 85v2M155 410v2M155 417v2M156 79v2M156 415v2M157 81v2M157 413v2M158 83v2M158 411v2M160 72v2M160 422v2M161 74v2M161 420v2M162 76v2M162 418v2M163 71v2M163 78v2M163 416v2M163 424v2M164 73v2M164 80v2M164 414v2M164 422v2M165 75v2M165 420v2M166 69v2M166 77v2M166 418v2M166 425v2M167 71v2M167 416v2M167 423v2M168 73v2M168 421v2M169 68v2M169 75v2M169 419v2M169 427v2M170 70v2M170 77v2M170 417v2M170 425v2M171 72v2M171 423v2M172 74v2M172 421v2M173 76v2M173 419v2M175 64v2M176 66v2M176 429v2M177 68v3M177 427v2M178 63v2M178 71v2M178 424v3M179 65v2M179 73v2M179 422v2M179 431v2M180 67v3M180 420v2M180 428v3M181 62v2M181 70v2M181 426v2M182 64v2M182 72v2M182 423v3M182 432v2M183 66v3M183 429v3M184 69v2M184 427v2M185 62v3M185 71v2M185 424v3M185 433v2M186 65v2M186 430v3M187 67v3M187 428v2M188 70v2M188 425v3M191 58v2M192 60v4M192 435v2M193 64v4M193 431v4M194 68v2M194 427v4M195 59v4M195 436v2M196 63v4M196 432v4M197 67v2M197 428v4M198 57v3M198 437v2M199 60v5M199 433v4M200 65v3M200 429v4M201 56v2M201 427v2M202 58v3M202 437v3M203 61v4M203 431v6M204 65v2M204 428v3M208 54v3M209 57v6M209 438v3M210 63v3M210 432v6M211 54v3M211 430v2M212 57v5M212 439v3M213 62v3M213 433v6M214 430v3M215 53v6M215 439v3M216 59v6M216 433v6M217 431v2M218 52v3M219 55v6M219 437v6M220 61v3M220 431v6M225 51v6M226 57v6M226 438v6M227 432v6M228 51v6M229 57v6M229 438v6M230 432v6M232 51v6M232 438v6M233 57v5M233 433v5M235 51v6M236 57v5M236 438v7M237 433v5M242 50v12M243 433v12M245 50v12M246 433v12M248 50v12M249 433v12M251 50v12M252 433v12M257 56v6M258 50v6M258 433v5M259 438v6M261 57v6M261 432v6M262 51v6M262 438v6M264 57v6M265 51v6M265 432v6M266 438v6M267 57v6M268 51v6M268 432v6M269 438v6M274 58v6M274 431v3M275 52v6M275 434v6M276 440v3M277 62v2M278 56v6M278 430v6M279 53v3M279 436v6M280 62v3M281 56v6M281 430v3M282 53v3M282 433v5M283 63v2M283 438v3M284 57v6M284 429v3M285 54v3M285 432v6M286 438v3M290 64v3M290 428v2M291 58v6M291 430v3M292 55v3M292 433v4M293 66v2M293 437v2M294 62v4M294 427v3M295 58v4M295 430v5M296 56v2M296 435v3M297 63v4M297 426v2M298 59v4M298 428v4M299 57v2M299 432v4M300 64v4M300 425v2M301 60v4M301 427v4M302 58v2M302 431v4M306 67v3M306 363v2M306 423v2M307 65v2M307 425v3M308 62v3M308 366v2M308 428v2M309 60v2M309 68v3M309 368v2M309 422v2M309 430v3M310 66v2M310 424v2M311 63v3M311 426v3M312 61v2M312 69v3M312 421v2M312 429v2M313 67v2M313 423v2M313 431v2M314 64v3M314 73v2M314 425v3M315 62v2M315 71v2M315 420v2M315 428v2M316 68v3M316 422v2M316 430v2M317 66v2M317 424v3M318 64v2M318 427v2M319 429v2M321 74v2M322 72v2M322 418v2M323 70v2M323 420v2M324 68v2M324 75v2M324 422v2M325 66v2M325 73v2M325 417v2M325 424v2M326 71v2M326 78v2M326 419v2M326 426v2M327 69v2M327 76v2M327 421v2M328 74v2M328 415v2M328 423v2M329 72v2M329 417v2M329 425v2M330 70v2M330 78v2M330 419v2M331 76v2M331 414v2M331 421v2M332 74v2M332 416v2M332 423v2M333 72v2M333 418v2M334 420v2M335 83v2M335 422v2M336 81v2M337 79v2M337 411v2M338 77v2M338 413v2M339 75v2M339 83v2M339 415v2M340 81v2M340 409v2M340 417v2M341 79v2M341 411v2M341 419v2M342 77v2M342 84v2M342 408v2M342 413v2M343 82v2M343 415v2M344 80v2M344 411v2M344 417v2M345 78v2M345 86v2M345 406v2M346 84v2M346 408v2M346 414v2M347 82v2M348 80v2M348 411v2M349 413v2M350 90v2M351 403v2M352 87v2M353 92v2M353 406v2M354 84v2M354 402v2M355 89v2M355 409v2M356 93v2M356 399v2M357 86v2M357 406v2M358 402v2M359 89v2M359 95v2M359 397v2M360 405v2M361 400v2M362 91v2M363 403v2M365 97v2M365 394v2M367 101v2M367 392v2M368 398v2M369 103v2M370 97v2M370 396v2M372 99v2M372 105v2M372 392v2M375 101v2"/>
<path stroke="#ffff00" d="M34 306v13M38 306v13M42 306v3M42 310v7M46 308v9M79 384v3M81 390v2M83 384v3M107 349v3M109 355v2M111 349v3M126 151v2M126 154v5M126 160v6M126 366v3M132 163v3M134 159v3M200 77v6M206 76v7M210 76v7M226 73v2M226 76v3M229 77v2M230 75v2M240 92v15M244 94v13M248 92v15M251 91v15M256 91v2M256 104v2M287 35v5M288 28v2M288 33v2M288 40v2M298 28v2M298 33v2M298 40v2M299 35v5M303 105v5M307 112v3M307 116v4M311 105v5M318 40v3M320 46v2M322 40v3M364 266v2M386 411v2M386 414v3M389 415v2M390 413v2M401 385v2M401 388v6M403 395v5M405 389v5M412 289v3M412 293v3M415 387v3M415 395v5M416 293v3M417 222v3M419 228v2M421 222v3M640 378v7M641 127v7M641 168v3M641 210v3M642 171v3M642 277v3M642 378v7M643 127v7M643 168v3M643 308v2M643 311v3M644 283v2M644 378v7M645 129v4M646 277v3M646 312v2M646 377v7M647 129v4M647 210v3M647 310v2M648 167v2M648 171v3"/>
<path stroke="#0000ff" d="M76 200v6M79 102v3M85 102v3M86 199v3M87 179v2M87 184v2M89 98v3M95 98v3M106 80v3M110 80v3M142 136v2M142 141v2M143 138v3M150 135v2M150 142v2M151 137v5M171 447v3M174 454v2M177 447v3M195 453v13M199 453v13M203 453v13M208 464v2M242 389v15M249 389v15M254 389v2M254 402v2M266 418v3M270 418v3M288 411v5M291 411v5M291 417v3M308 371v5M309 376v2M312 372v3M314 380v3M314 384v4M316 372v3M319 376v2M320 371v5M368 122v3M368 126v3M372 122v3M372 126v3M382 138v3M385 145v2M386 271v2M386 274v2M387 276v2M388 138v3M392 271v2M392 274v5M392 280v3M392 284v4M397 276v2M398 271v2M398 274v2M449 177v2M449 186v2M450 179v3M450 183v3M458 179v3M458 183v3M459 177v2M459 186v2M460 207v2M460 212v2M640 231v2M641 147v7M641 336v3M642 188v2M642 191v2M643 147v7M643 231v2M643 259v3M644 328v2M644 333v2M644 343v2M645 147v7M645 229v2M646 188v2M646 191v2M647 259v3M647 336v3M648 152v2M648 229v2"/>
<path stroke="#007f7f" d="M204 389v5M216 389v5M333 127v5M335 133v2M335 136v2M343 133v2M343 136v2M345 127v5M641 348v3M641 359v3M647 348v3M647 359v3"/>
</g>
</svg>
<svg width="0" height="0" style="position:absolute"><filter id="thr" x="0" y="0" width="100%" height="100%" color-interpolation-filters="sRGB"><feComponentTransfer><feFuncA type="linear" slope="2" intercept="-0.5"/></feComponentTransfer></filter></svg>
<div id="side">
<div class="r" style="top:6px"><span class="s" style="left:0px;color:#ffffff">Astrolog 5.41G</span></div>
<div class="r" style="top:16px"><span class="s" style="left:0px;color:#ffffff">Fri 15 April 2005</span></div>
<div class="r" style="top:26px"><span class="s" style="left:0px;color:#ffffff">14:27:00 (ST +8:00 GMT)</span></div>
<div class="r" style="top:36px"><span class="s" style="left:0px;color:#bfbfbf">114°09'00&quot;E 22°17'00&quot;N</span></div>
<div class="r" style="top:46px"><span class="s" style="left:0px;color:#bfbfbf">Porphyry houses.</span></div>
<div class="r" style="top:56px"><span class="s" style="left:0px;color:#bfbfbf">Tropical, Geocentric.</span></div>
<div class="r" style="top:66px"><span class="s" style="left:0px;color:#ffffff">Julian Day = 2453475.7688</span></div>
<div class="r" style="top:76px"><span class="s" style="left:0px;color:#bfbfbf">Obliquity = 23°26'19&quot;</span></div>
<div class="r" style="top:86px"><span class="s" style="left:0px;color:#bfbfbf">Sidereal time:  3:37:40</span></div>
<div class="r" style="top:96px"><span class="s" style="left:0px;color:#bfbfbf">DeltaT =  71.5666</span></div>
<div class="r" style="top:116px"><span class="s" style="left:0px;color:#ff0000"> 1st house: 27Leo23</span></div>
<div class="r" style="top:126px"><span class="s" style="left:0px;color:#ffff00"> 2nd house: 27Vir10</span></div>
<div class="r" style="top:136px"><span class="s" style="left:0px;color:#00ff00"> 3rd house: 26Lib56</span></div>
<div class="r" style="top:146px"><span class="s" style="left:0px;color:#0000ff"> 4th house: 26Sco43</span></div>
<div class="r" style="top:156px"><span class="s" style="left:0px;color:#ff0000"> 5th house: 26Sag56</span></div>
<div class="r" style="top:166px"><span class="s" style="left:0px;color:#ffff00"> 6th house: 27Cap10</span></div>
<div class="r" style="top:176px"><span class="s" style="left:0px;color:#00ff00"> 7th house: 27Aqu23</span></div>
<div class="r" style="top:186px"><span class="s" style="left:0px;color:#0000ff"> 8th house: 27Pis10</span></div>
<div class="r" style="top:196px"><span class="s" style="left:0px;color:#ff0000"> 9th house: 26Ari56</span></div>
<div class="r" style="top:206px"><span class="s" style="left:0px;color:#ffff00">10th house: 26Tau43</span></div>
<div class="r" style="top:216px"><span class="s" style="left:0px;color:#00ff00">11th house: 26Gem56</span></div>
<div class="r" style="top:226px"><span class="s" style="left:0px;color:#0000ff">12th house: 27Can10</span></div>
<div class="r" style="top:246px"><span class="s" style="left:0px;color:#ff0000"> Sun:</span><span class="s" style="left:36px;color:#ff0000">25Ari23</span><span class="s" style="left:90px;color:#bfbfbf">+ 0°00'</span></div>
<div class="r" style="top:256px"><span class="s" style="left:0px;color:#0000ff">Moon:</span><span class="s" style="left:36px;color:#0000ff">10Can44</span><span class="s" style="left:90px;color:#bfbfbf">+ 5°10'</span></div>
<div class="r" style="top:266px"><span class="s" style="left:0px;color:#00ff00">Merc:</span><span class="s" style="left:36px;color:#ff0000"> 2Ari07</span><span class="s" style="left:90px;color:#bfbfbf">− 1°03'</span></div>
<div class="r" style="top:276px"><span class="s" style="left:0px;color:#ffff00">Venu:</span><span class="s" style="left:36px;color:#ff0000">29Ari16</span><span class="s" style="left:90px;color:#bfbfbf">− 0°57'</span></div>
<div class="r" style="top:286px"><span class="s" style="left:0px;color:#ff0000">Mars:</span><span class="s" style="left:36px;color:#00ff00">18Aqu29</span><span class="s" style="left:90px;color:#bfbfbf">− 1°20'</span></div>
<div class="r" style="top:296px"><span class="s" style="left:0px;color:#ff0000">Jupi:</span><span class="s" style="left:36px;color:#00ff00">12Lib30</span><span class="s" style="left:78px;color:#ffffff">R</span><span class="s" style="left:90px;color:#bfbfbf">+ 1°35'</span></div>
<div class="r" style="top:306px"><span class="s" style="left:0px;color:#ffff00">Satu:</span><span class="s" style="left:36px;color:#0000ff">20Can56</span><span class="s" style="left:90px;color:#bfbfbf">+ 0°09'</span></div>
<div class="r" style="top:316px"><span class="s" style="left:0px;color:#00ff00">Uran:</span><span class="s" style="left:36px;color:#0000ff"> 9Pis21</span><span class="s" style="left:90px;color:#bfbfbf">− 0°44'</span></div>
<div class="r" style="top:326px"><span class="s" style="left:0px;color:#0000ff">Nept:</span><span class="s" style="left:36px;color:#00ff00">17Aqu17</span><span class="s" style="left:90px;color:#bfbfbf">− 0°07'</span></div>
<div class="r" style="top:336px"><span class="s" style="left:0px;color:#0000ff">Plut:</span><span class="s" style="left:36px;color:#ff0000">24Sag25</span><span class="s" style="left:78px;color:#ffffff">R</span><span class="s" style="left:90px;color:#bfbfbf">+ 8°16'</span></div>
<div class="r" style="top:346px"><span class="s" style="left:0px;color:#007f7f">Node:</span><span class="s" style="left:36px;color:#ff0000">22Ari48</span><span class="s" style="left:78px;color:#ffffff">R</span><span class="s" style="left:90px;color:#bfbfbf">+ 0°00'</span></div>
<div class="r" style="top:356px"><span class="s" style="left:0px;color:#007f7f">Fort:</span><span class="s" style="left:36px;color:#0000ff">12Sco43</span></div>
<div class="r" style="top:366px"><span class="s" style="left:0px;color:#ff0000">Asce:</span><span class="s" style="left:36px;color:#ff0000">27Leo23</span></div>
<div class="r" style="top:376px"><span class="s" style="left:0px;color:#ffff00">Midh:</span><span class="s" style="left:36px;color:#ffff00">26Tau43</span></div>
<div class="r" style="top:396px"><span class="s" style="left:0px;color:#bfbfbf">Fire: 6, Earth: 1,</span></div>
<div class="r" style="top:406px"><span class="s" style="left:0px;color:#bfbfbf">Air : 4, Water: 5</span></div>
<div class="r" style="top:416px"><span class="s" style="left:0px;color:#bfbfbf">Car: 7, Fix: 7, Mut: 2</span></div>
<div class="r" style="top:426px"><span class="s" style="left:0px;color:#bfbfbf">Yang: 10, Yin: 6</span></div>
<div class="r" style="top:436px"><span class="s" style="left:0px;color:#bfbfbf">M: 7, N: 5, A: 4, D: 8</span></div>
<div class="r" style="top:446px"><span class="s" style="left:0px;color:#bfbfbf">Ang: 2, Suc: 6, Cad: 4</span></div>
<div class="r" style="top:456px"><span class="s" style="left:0px;color:#bfbfbf">Learn: 8, Share: 8</span></div>
</div>
</body></html>
